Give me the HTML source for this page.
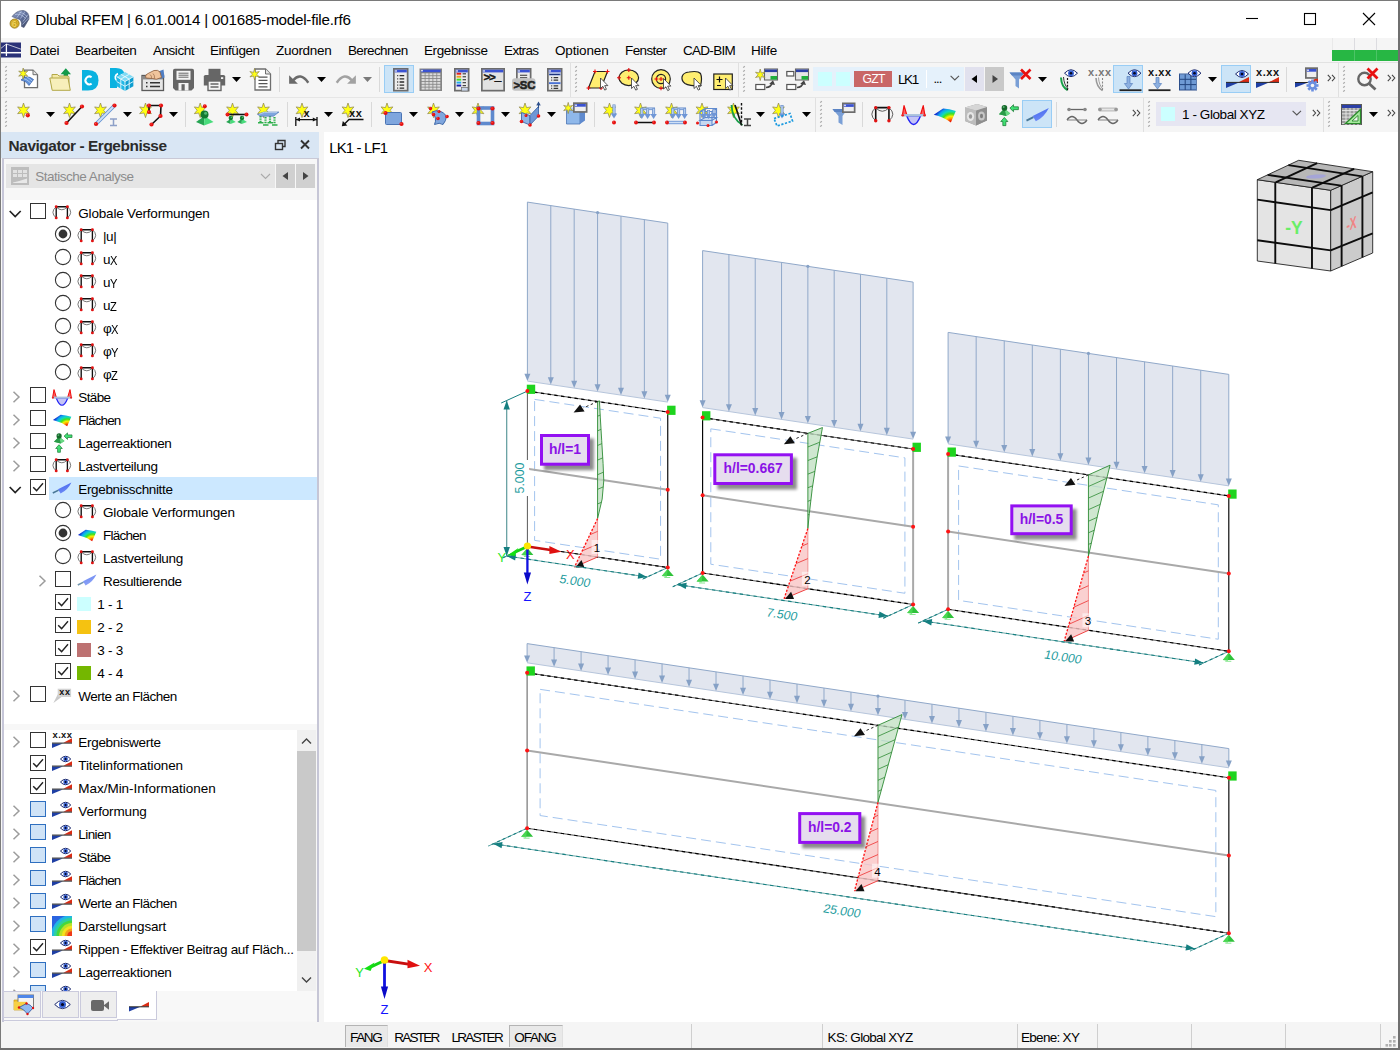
<!DOCTYPE html>
<html lang="de"><head><meta charset="utf-8"><title>Dlubal RFEM</title><style>
html,body{margin:0;padding:0}
body{width:1400px;height:1050px;position:relative;overflow:hidden;background:#f5f5f5;font-family:"Liberation Sans",sans-serif;font-size:13px;color:#000}
.t{position:absolute;white-space:nowrap}
.a{position:absolute}
</style></head><body>
<div class="a" style="left:0px;top:0px;width:1400px;height:38px;background:#fff;"></div>
<div class="t" style="left:35.30px;top:8.98px;font-size:15.2px;line-height:21px;letter-spacing:-0.228px;color:#000;">Dlubal RFEM | 6.01.0014 | 001685-model-file.rf6</div>
<svg class="a" style="left:9px;top:9px" width="22" height="21"><defs><linearGradient id="ti" x1="0" y1="0" x2="1" y2="1"><stop offset="0" stop-color="#8fa0c8"/><stop offset=".5" stop-color="#5f6f9a"/><stop offset="1" stop-color="#3c4662"/></linearGradient></defs><path d="M3 7.5Q8 1 14.5 1.5Q20.5 3 20 10L15 18.5L12.5 17.5Q13.5 10 7.5 9.5Z" fill="url(#ti)" stroke="#4a5470" stroke-width=".6"/><path d="M6 5.5Q12 4 16.5 9.5M9.5 3Q15 3.5 18.5 8M8 8.5L12.5 2M11.5 9.5L16 2.5M14 12.5L19 5.5M13.5 15.5L20 8.5" stroke="#c9d6f2" stroke-width=".7" fill="none" opacity=".85"/><circle cx="5.6" cy="14.6" r="4.6" fill="#d8b02a" stroke="#8a6e14" stroke-width=".7"/><text x="5.7" y="18.1" font-size="9.5" font-weight="bold" fill="#7a5c08" text-anchor="middle" font-family="Liberation Sans, sans-serif">6</text><text x="5.3" y="17.8" font-size="9.5" font-weight="bold" fill="#f4d85a" text-anchor="middle" font-family="Liberation Sans, sans-serif">6</text></svg>
<svg class="a" style="left:1230px;top:0" width="170" height="38"><path d="M16 18.5H28" stroke="#000" stroke-width="1.1" fill="none"/><rect x="74.5" y="13.5" width="11" height="11" stroke="#000" stroke-width="1.1" fill="none"/><path d="M133 13L145 25M145 13L133 25" stroke="#000" stroke-width="1.1" fill="none"/></svg>
<div class="a" style="left:0px;top:38px;width:1400px;height:24px;background:#f5f5f5;"></div>
<div class="t" style="left:29.50px;top:41.04px;font-size:13.5px;line-height:19px;letter-spacing:-0.403px;color:#000;">Datei</div>
<div class="t" style="left:75.00px;top:41.04px;font-size:13.5px;line-height:19px;letter-spacing:-0.380px;color:#000;">Bearbeiten</div>
<div class="t" style="left:153.00px;top:41.04px;font-size:13.5px;line-height:19px;letter-spacing:-0.467px;color:#000;">Ansicht</div>
<div class="t" style="left:210.00px;top:41.04px;font-size:13.5px;line-height:19px;letter-spacing:-0.475px;color:#000;">Einfügen</div>
<div class="t" style="left:276.00px;top:41.04px;font-size:13.5px;line-height:19px;letter-spacing:-0.287px;color:#000;">Zuordnen</div>
<div class="t" style="left:348.00px;top:41.04px;font-size:13.5px;line-height:19px;letter-spacing:-0.645px;color:#000;">Berechnen</div>
<div class="t" style="left:424.00px;top:41.04px;font-size:13.5px;line-height:19px;letter-spacing:-0.404px;color:#000;">Ergebnisse</div>
<div class="t" style="left:504.00px;top:41.04px;font-size:13.5px;line-height:19px;letter-spacing:-0.627px;color:#000;">Extras</div>
<div class="t" style="left:555.00px;top:41.04px;font-size:13.5px;line-height:19px;letter-spacing:-0.162px;color:#000;">Optionen</div>
<div class="t" style="left:625.00px;top:41.04px;font-size:13.5px;line-height:19px;letter-spacing:-0.610px;color:#000;">Fenster</div>
<div class="t" style="left:683.00px;top:41.04px;font-size:13.5px;line-height:19px;letter-spacing:-0.715px;color:#000;">CAD-BIM</div>
<div class="t" style="left:751.00px;top:41.04px;font-size:13.5px;line-height:19px;letter-spacing:-0.201px;color:#000;">Hilfe</div>
<svg class="a" style="left:1px;top:42px" width="21" height="16"><rect x="0" y=".5" width="20" height="15" fill="#2a3278"/><path d="M5.4 2V14" stroke="#fff" stroke-width="1.3"/><path d="M0 10.7H20" stroke="#fff" stroke-width="1.5"/><path d="M5.4 2L0 6.3M5.4 2L20 7.2" stroke="#fff" stroke-width=".7"/></svg>
<div class="a" style="left:1332px;top:38px;width:1px;height:23px;background:#e9e9e9;"></div>
<div class="a" style="left:1354px;top:38px;width:1px;height:23px;background:#dcdce0;"></div>
<div class="a" style="left:1376px;top:38px;width:1px;height:23px;background:#dcdce0;"></div>
<div class="a" style="left:1332px;top:50px;width:66px;height:11px;background:#27b744;"></div>
<div class="a" style="left:1354px;top:50px;width:1px;height:11px;background:#4cc466;"></div>
<div class="a" style="left:1376px;top:50px;width:1px;height:11px;background:#4cc466;"></div>
<div class="a" style="left:0px;top:62px;width:1400px;height:1px;background:#e2e2e2;"></div>
<div class="a" style="left:0px;top:97px;width:1400px;height:1px;background:#e6e6e6;"></div>
<svg class="a" style="left:4.6px;top:66px;overflow:visible" width="3" height="27"><path d="M0.2 1.6l1.6 -1.4" stroke="#a9a9a9" stroke-width="1.2"/><path d="M0.2 5.6l1.6 -1.4" stroke="#a9a9a9" stroke-width="1.2"/><path d="M0.2 9.6l1.6 -1.4" stroke="#a9a9a9" stroke-width="1.2"/><path d="M0.2 13.6l1.6 -1.4" stroke="#a9a9a9" stroke-width="1.2"/><path d="M0.2 17.6l1.6 -1.4" stroke="#a9a9a9" stroke-width="1.2"/><path d="M0.2 21.6l1.6 -1.4" stroke="#a9a9a9" stroke-width="1.2"/><path d="M0.2 25.6l1.6 -1.4" stroke="#a9a9a9" stroke-width="1.2"/></svg>
<svg class="a" style="left:4.6px;top:101px;overflow:visible" width="3" height="27"><path d="M0.2 1.6l1.6 -1.4" stroke="#a9a9a9" stroke-width="1.2"/><path d="M0.2 5.6l1.6 -1.4" stroke="#a9a9a9" stroke-width="1.2"/><path d="M0.2 9.6l1.6 -1.4" stroke="#a9a9a9" stroke-width="1.2"/><path d="M0.2 13.6l1.6 -1.4" stroke="#a9a9a9" stroke-width="1.2"/><path d="M0.2 17.6l1.6 -1.4" stroke="#a9a9a9" stroke-width="1.2"/><path d="M0.2 21.6l1.6 -1.4" stroke="#a9a9a9" stroke-width="1.2"/><path d="M0.2 25.6l1.6 -1.4" stroke="#a9a9a9" stroke-width="1.2"/></svg>
<svg class="a" style="left:575.2px;top:66px;overflow:visible" width="3" height="27"><path d="M0.2 1.6l1.6 -1.4" stroke="#a9a9a9" stroke-width="1.2"/><path d="M0.2 5.6l1.6 -1.4" stroke="#a9a9a9" stroke-width="1.2"/><path d="M0.2 9.6l1.6 -1.4" stroke="#a9a9a9" stroke-width="1.2"/><path d="M0.2 13.6l1.6 -1.4" stroke="#a9a9a9" stroke-width="1.2"/><path d="M0.2 17.6l1.6 -1.4" stroke="#a9a9a9" stroke-width="1.2"/><path d="M0.2 21.6l1.6 -1.4" stroke="#a9a9a9" stroke-width="1.2"/><path d="M0.2 25.6l1.6 -1.4" stroke="#a9a9a9" stroke-width="1.2"/></svg>
<svg class="a" style="left:743.2px;top:66px;overflow:visible" width="3" height="27"><path d="M0.2 1.6l1.6 -1.4" stroke="#a9a9a9" stroke-width="1.2"/><path d="M0.2 5.6l1.6 -1.4" stroke="#a9a9a9" stroke-width="1.2"/><path d="M0.2 9.6l1.6 -1.4" stroke="#a9a9a9" stroke-width="1.2"/><path d="M0.2 13.6l1.6 -1.4" stroke="#a9a9a9" stroke-width="1.2"/><path d="M0.2 17.6l1.6 -1.4" stroke="#a9a9a9" stroke-width="1.2"/><path d="M0.2 21.6l1.6 -1.4" stroke="#a9a9a9" stroke-width="1.2"/><path d="M0.2 25.6l1.6 -1.4" stroke="#a9a9a9" stroke-width="1.2"/></svg>
<svg class="a" style="left:1343.2px;top:66px;overflow:visible" width="3" height="27"><path d="M0.2 1.6l1.6 -1.4" stroke="#a9a9a9" stroke-width="1.2"/><path d="M0.2 5.6l1.6 -1.4" stroke="#a9a9a9" stroke-width="1.2"/><path d="M0.2 9.6l1.6 -1.4" stroke="#a9a9a9" stroke-width="1.2"/><path d="M0.2 13.6l1.6 -1.4" stroke="#a9a9a9" stroke-width="1.2"/><path d="M0.2 17.6l1.6 -1.4" stroke="#a9a9a9" stroke-width="1.2"/><path d="M0.2 21.6l1.6 -1.4" stroke="#a9a9a9" stroke-width="1.2"/><path d="M0.2 25.6l1.6 -1.4" stroke="#a9a9a9" stroke-width="1.2"/></svg>
<svg class="a" style="left:820.2px;top:101px;overflow:visible" width="3" height="27"><path d="M0.2 1.6l1.6 -1.4" stroke="#a9a9a9" stroke-width="1.2"/><path d="M0.2 5.6l1.6 -1.4" stroke="#a9a9a9" stroke-width="1.2"/><path d="M0.2 9.6l1.6 -1.4" stroke="#a9a9a9" stroke-width="1.2"/><path d="M0.2 13.6l1.6 -1.4" stroke="#a9a9a9" stroke-width="1.2"/><path d="M0.2 17.6l1.6 -1.4" stroke="#a9a9a9" stroke-width="1.2"/><path d="M0.2 21.6l1.6 -1.4" stroke="#a9a9a9" stroke-width="1.2"/><path d="M0.2 25.6l1.6 -1.4" stroke="#a9a9a9" stroke-width="1.2"/></svg>
<svg class="a" style="left:1148.2px;top:101px;overflow:visible" width="3" height="27"><path d="M0.2 1.6l1.6 -1.4" stroke="#a9a9a9" stroke-width="1.2"/><path d="M0.2 5.6l1.6 -1.4" stroke="#a9a9a9" stroke-width="1.2"/><path d="M0.2 9.6l1.6 -1.4" stroke="#a9a9a9" stroke-width="1.2"/><path d="M0.2 13.6l1.6 -1.4" stroke="#a9a9a9" stroke-width="1.2"/><path d="M0.2 17.6l1.6 -1.4" stroke="#a9a9a9" stroke-width="1.2"/><path d="M0.2 21.6l1.6 -1.4" stroke="#a9a9a9" stroke-width="1.2"/><path d="M0.2 25.6l1.6 -1.4" stroke="#a9a9a9" stroke-width="1.2"/></svg>
<svg class="a" style="left:1328.2px;top:101px;overflow:visible" width="3" height="27"><path d="M0.2 1.6l1.6 -1.4" stroke="#a9a9a9" stroke-width="1.2"/><path d="M0.2 5.6l1.6 -1.4" stroke="#a9a9a9" stroke-width="1.2"/><path d="M0.2 9.6l1.6 -1.4" stroke="#a9a9a9" stroke-width="1.2"/><path d="M0.2 13.6l1.6 -1.4" stroke="#a9a9a9" stroke-width="1.2"/><path d="M0.2 17.6l1.6 -1.4" stroke="#a9a9a9" stroke-width="1.2"/><path d="M0.2 21.6l1.6 -1.4" stroke="#a9a9a9" stroke-width="1.2"/><path d="M0.2 25.6l1.6 -1.4" stroke="#a9a9a9" stroke-width="1.2"/></svg>
<div class="a" style="left:570px;top:63px;width:1px;height:34px;background:#e0e0e0"></div>
<div class="a" style="left:738px;top:63px;width:1px;height:34px;background:#e0e0e0"></div>
<div class="a" style="left:1338px;top:63px;width:1px;height:34px;background:#e0e0e0"></div>
<div class="a" style="left:815px;top:98px;width:1px;height:34px;background:#e0e0e0"></div>
<div class="a" style="left:1143px;top:98px;width:1px;height:34px;background:#e0e0e0"></div>
<div class="a" style="left:1323px;top:98px;width:1px;height:34px;background:#e0e0e0"></div>
<div class="a" style="left:279px;top:67px;width:1px;height:25px;background:#d9d9d9"></div>
<div class="a" style="left:379px;top:67px;width:1px;height:25px;background:#d9d9d9"></div>
<div class="a" style="left:1286px;top:67px;width:1px;height:25px;background:#d9d9d9"></div>
<div class="a" style="left:185px;top:102px;width:1px;height:25px;background:#d9d9d9"></div>
<div class="a" style="left:287px;top:102px;width:1px;height:25px;background:#d9d9d9"></div>
<div class="a" style="left:371px;top:102px;width:1px;height:25px;background:#d9d9d9"></div>
<div class="a" style="left:594px;top:102px;width:1px;height:25px;background:#d9d9d9"></div>
<div class="a" style="left:862px;top:102px;width:1px;height:25px;background:#d9d9d9"></div>
<div class="a" style="left:1056px;top:102px;width:1px;height:25px;background:#d9d9d9"></div>
<svg class="a" style="left:18px;top:68px;overflow:visible" width="22" height="22"><path d="M6.5 2.2H15L19.5 6.7V19.7H6.5Z" fill="#fff" stroke="#6e6e6e" stroke-width="1.3"/><path d="M15 2.2V6.7H19.5" fill="#e4e4e4" stroke="#6e6e6e" stroke-width="1"/><path d="M3 12Q9 6 15.5 11.5L11 17.5Q8 12.5 3 12Z" fill="#5f8fd8" stroke="#2c58a6" stroke-width=".7"/><path d="M5.5 10.5Q8.5 11 12.8 15M8.5 8.8Q11 10 14.3 13.2" stroke="#c6dcf7" stroke-width=".7" fill="none"/><polygon points="5.2,0 6.25,3.78 9.71,3 7.3,5.6 9.71,8.2 6.25,7.42 5.2,11.2 4.15,7.42 0.69,8.2 3.1,5.6 0.69,3 4.15,3.78" fill="#ffff14" stroke="#8c8450" stroke-width=".7" stroke-linejoin="miter"/></svg>
<svg class="a" style="left:49px;top:68px;overflow:visible" width="23" height="23"><path d="M14.6 11V6.2H11.6L16.8 .3L22 6.2H19V11Z" fill="#129a4a"/><path d="M3 6.5H8.5L10 8H18.5Q20 8 20 9.5V20.5H3Z" fill="#f3e9a8" stroke="#b3a848" stroke-width="1"/><path d="M.8 10H19L21.3 22.3H3.2Z" fill="#f7efba" stroke="#b3a848" stroke-width="1" stroke-linejoin="round"/></svg>
<svg class="a" style="left:82px;top:69.5px;overflow:visible" width="17" height="21"><path d="M0 0H6Q16.5 0 16.5 10.3Q16.5 20.6 6 20.6H0Z" fill="#0ab2e0"/><path d="M9.6 13.6A3.9 3.9 0 1 1 9.6 7.2" fill="none" stroke="#fff" stroke-width="2"/></svg>
<svg class="a" style="left:110px;top:68px;overflow:visible" width="24" height="24"><path d="M0 0H6Q13.5 0 14.5 6L7 10V20H0Z" fill="#0ab2e0"/><path d="M6.8 12.5A4 4 0 0 1 8 5.6" fill="none" stroke="#fff" stroke-width="1.8"/><polygon points="6.65,8.7 15,3.9 23.35,8.7 15,13.5" fill="#7fdaf4"/><polygon points="6.65,8.7 15,13.5 15,23.1 6.65,18.3" fill="#22b8e6"/><polygon points="15,13.5 23.35,8.7 23.35,18.3 15,23.1" fill="#0e9ed0"/><path d="M15 13.5L23.35 8.7M15 13.5L15 23.1M15 13.5L6.65 8.7M10.82 6.3L19.18 11.1M19.18 6.3L10.82 11.1M6.65 13.5L15 18.3M10.82 11.1L10.82 20.7M19.18 11.1L19.18 20.7M15 18.3L23.35 13.5" stroke="#e8f8fe" stroke-width=".9" fill="none"/></svg>
<svg class="a" style="left:141px;top:68px;overflow:visible" width="24" height="24"><rect x="1" y="7.5" width="21.5" height="15" fill="#e6e6e6" stroke="#5a5a5a" stroke-width="1.3"/><rect x="1.5" y="8" width="20.5" height="3.4" fill="#8a8a8a"/><path d="M5 14.8H6.5M9 14.8H19M5 18.6H6.5M9 18.6H19" stroke="#333" stroke-width="1.5"/><path d="M22.5 1.5L17.5 3.5L19.5 11L23.5 9.5Z" fill="#4f7ec4"/><path d="M4.5 9Q4 6.5 8 5L13 2.5Q17 1.5 19 4L20.5 9.5Q15 12.5 11.5 10.5L7 10.2Q5 10.5 4.5 9Z" fill="#f0c49c" stroke="#8a5a3a" stroke-width=".8"/><path d="M9 6.5Q11 8 10.5 10M12 5.5Q14 7.5 13.5 10.5" stroke="#8a5a3a" stroke-width=".6" fill="none"/></svg>
<svg class="a" style="left:172px;top:68px;overflow:visible" width="24" height="23"><path d="M1 2.5Q1 .8 2.8 .8H20.2Q22 .8 22 2.5V20L19.5 22.5H3.5L1 20Z" fill="#666"/><rect x="4.5" y="2.8" width="14" height="9" fill="#f4f4f4"/><path d="M6.5 5.2H16.5M6.5 7.2H16.5M6.5 9.2H16.5" stroke="#666" stroke-width="1"/><rect x="6.5" y="15" width="10" height="7.5" fill="#f4f4f4"/><rect x="9.5" y="16.2" width="3.2" height="6.3" fill="#666"/></svg>
<svg class="a" style="left:203px;top:68px;overflow:visible" width="24" height="23"><rect x="5.5" y=".8" width="12" height="7" fill="#666"/><path d="M.8 8.5Q.8 7 2.5 7H20.5Q22.2 7 22.2 8.5V17.5H.8Z" fill="#666"/><rect x="18" y="9.2" width="2.2" height="1.8" fill="#f4f4f4"/><rect x="5" y="13" width="13" height="9.5" fill="#f4f4f4" stroke="#666" stroke-width="1.4"/><path d="M7.5 16H15.5M7.5 19H15.5" stroke="#666" stroke-width="1.3"/></svg>
<svg class="a" style="left:232px;top:77px;overflow:visible" width="9" height="5"><path d="M0 0H9L4.5 5Z" fill="#000"/></svg>
<svg class="a" style="left:249px;top:68px;overflow:visible" width="24" height="23"><path d="M6 1H16.5L21.5 6V22H6Z" fill="#fff" stroke="#6e6e6e" stroke-width="1.3"/><path d="M16.5 1V6H21.5" fill="#e4e4e4" stroke="#6e6e6e" stroke-width="1"/><path d="M9.5 9.2H18.5M9.5 12.4H18.5M9.5 15.6H18.5M9.5 18.8H18.5" stroke="#555" stroke-width="1.2"/><polygon points="5.6,0.4 6.65,4.38 10.27,3.5 7.7,6.2 10.27,8.9 6.65,8.02 5.6,12 4.55,8.02 0.93,8.9 3.5,6.2 0.93,3.5 4.55,4.38" fill="#ffff14" stroke="#8c8450" stroke-width=".7" stroke-linejoin="miter"/></svg>
<svg class="a" style="left:289px;top:75px;overflow:visible" width="21" height="10"><path d="M4 5.5Q11.5 -3.5 19.3 7.7" fill="none" stroke="#6a6a6a" stroke-width="2.5"/><path d="M.1 .2V8.8H8.9Z" fill="#6a6a6a"/></svg>
<svg class="a" style="left:317px;top:77px;overflow:visible" width="9" height="5"><path d="M0 0H9L4.5 5Z" fill="#000"/></svg>
<svg class="a" style="left:335.7px;top:75px;overflow:visible" width="21" height="10"><path d="M16 5.5Q8.5 -3.5 .7 7.7" fill="none" stroke="#a2a2a2" stroke-width="2.5"/><path d="M19.9 .2V8.8H11.1Z" fill="#a2a2a2"/></svg>
<svg class="a" style="left:363px;top:77px;overflow:visible" width="9" height="5"><path d="M0 0H9L4.5 5Z" fill="#7a7a7a"/></svg>
<div class="a" style="left:384px;top:65px;width:30px;height:28px;background:#cce4f7;border:1px solid #99cdf5;box-sizing:border-box"></div>
<svg class="a" style="left:393px;top:68px;overflow:visible" width="15" height="23"><rect x="0.85" y="0.85" width="13.8" height="21.8" fill="#ececec" stroke="#6c6c6c" stroke-width="1.7"/><rect x="1.7" y="1.7" width="12.1" height="2.7" fill="#3a52d2"/><rect x="2.2" y="2.2" width="1.6" height="1.5" fill="#f2f2f2"/><path d="M4.2 7.6H5.2M6.6 7.6H11.2M4.2 10.8H5.2M6.6 10.8H11.2M4.2 14H5.2M6.6 14H11.2M4.2 17.2H5.2M6.6 17.2H11.2M4.2 20.2H5.2M6.6 20.2H11.2" stroke="#2a2a2a" stroke-width="1.3"/></svg>
<svg class="a" style="left:419px;top:68px;overflow:visible" width="23" height="23"><rect x=".5" y=".5" width="22.5" height="22.5" fill="#858585"/><rect x="1.8" y="1.6" width="19.8" height="2.6" fill="#3a52d2"/><rect x="2.2" y="1.9" width="1.6" height="1.5" fill="#f2f2f2"/><rect x="2.6" y="5.3" width="3.1" height="2" fill="#dcdcdc"/><rect x="6.5" y="5.3" width="3.1" height="2" fill="#dcdcdc"/><rect x="10.4" y="5.3" width="3.1" height="2" fill="#dcdcdc"/><rect x="14.3" y="5.3" width="3.1" height="2" fill="#dcdcdc"/><rect x="18.2" y="5.3" width="3.1" height="2" fill="#dcdcdc"/><rect x="2.6" y="8.15" width="3.1" height="2" fill="#dcdcdc"/><rect x="6.5" y="8.15" width="3.1" height="2" fill="#dcdcdc"/><rect x="10.4" y="8.15" width="3.1" height="2" fill="#dcdcdc"/><rect x="14.3" y="8.15" width="3.1" height="2" fill="#dcdcdc"/><rect x="18.2" y="8.15" width="3.1" height="2" fill="#dcdcdc"/><rect x="2.6" y="11" width="3.1" height="2" fill="#dcdcdc"/><rect x="6.5" y="11" width="3.1" height="2" fill="#dcdcdc"/><rect x="10.4" y="11" width="3.1" height="2" fill="#dcdcdc"/><rect x="14.3" y="11" width="3.1" height="2" fill="#dcdcdc"/><rect x="18.2" y="11" width="3.1" height="2" fill="#dcdcdc"/><rect x="2.6" y="13.85" width="3.1" height="2" fill="#dcdcdc"/><rect x="6.5" y="13.85" width="3.1" height="2" fill="#dcdcdc"/><rect x="10.4" y="13.85" width="3.1" height="2" fill="#dcdcdc"/><rect x="14.3" y="13.85" width="3.1" height="2" fill="#dcdcdc"/><rect x="18.2" y="13.85" width="3.1" height="2" fill="#dcdcdc"/><rect x="2.6" y="16.7" width="3.1" height="2" fill="#dcdcdc"/><rect x="6.5" y="16.7" width="3.1" height="2" fill="#dcdcdc"/><rect x="10.4" y="16.7" width="3.1" height="2" fill="#dcdcdc"/><rect x="14.3" y="16.7" width="3.1" height="2" fill="#dcdcdc"/><rect x="18.2" y="16.7" width="3.1" height="2" fill="#dcdcdc"/><rect x="2.6" y="19.55" width="3.1" height="2" fill="#dcdcdc"/><rect x="6.5" y="19.55" width="3.1" height="2" fill="#dcdcdc"/><rect x="10.4" y="19.55" width="3.1" height="2" fill="#dcdcdc"/><rect x="14.3" y="19.55" width="3.1" height="2" fill="#dcdcdc"/><rect x="18.2" y="19.55" width="3.1" height="2" fill="#dcdcdc"/></svg>
<svg class="a" style="left:454px;top:68px;overflow:visible" width="16" height="23"><rect x="0.85" y="0.85" width="13.8" height="21.8" fill="#ececec" stroke="#6c6c6c" stroke-width="1.7"/><rect x="1.7" y="1.7" width="12.1" height="2.7" fill="#3a52d2"/><rect x="2.2" y="2.2" width="1.6" height="1.5" fill="#f2f2f2"/><rect x="2.6" y="4.8" width="4.6" height="1.9" fill="#e02020"/><path d="M8.6 5.8H12" stroke="#444" stroke-width="1.2"/><rect x="2.6" y="7.75" width="4.6" height="1.9" fill="#f0a020"/><path d="M8.6 8.75H12" stroke="#444" stroke-width="1.2"/><rect x="2.6" y="10.7" width="4.6" height="1.9" fill="#40e020"/><path d="M8.6 11.7H12" stroke="#444" stroke-width="1.2"/><rect x="2.6" y="13.65" width="4.6" height="1.9" fill="#20a8f0"/><path d="M8.6 14.65H12" stroke="#444" stroke-width="1.2"/><rect x="2.6" y="16.6" width="4.6" height="1.9" fill="#1a20b0"/><path d="M8.6 17.6H12" stroke="#444" stroke-width="1.2"/><rect x="7.5" y="19.6" width="6.5" height="3.4" fill="#c8d4e8" stroke="#6a6a6a" stroke-width=".7"/></svg>
<svg class="a" style="left:481px;top:68px;overflow:visible" width="23" height="23"><rect x="0.85" y="0.85" width="22.3" height="21.8" fill="#e2e2e2" stroke="#6c6c6c" stroke-width="1.7"/><rect x="1.7" y="1.7" width="20.6" height="2.7" fill="#3a52d2"/><rect x="2.2" y="2.2" width="1.6" height="1.5" fill="#f2f2f2"/><text x="2.6" y="12.6" font-size="11.5" font-weight="bold" fill="#161616" stroke="#161616" stroke-width=".4" font-family="Liberation Mono, monospace" letter-spacing="-1.4">&gt;&gt;_</text></svg>
<svg class="a" style="left:512px;top:68px;overflow:visible" width="24" height="23"><rect x="4.85" y="0.85" width="13.8" height="12.3" fill="#ececec" stroke="#6c6c6c" stroke-width="1.7"/><rect x="5.7" y="1.7" width="12.1" height="2.7" fill="#3a52d2"/><rect x="6.2" y="2.2" width="1.6" height="1.5" fill="#f2f2f2"/><path d="M8 7.2H15.2M8 9.8H15.2" stroke="#333" stroke-width="1.1"/><rect x="0" y="10.2" width="23.5" height="12.6" rx="3" fill="#c2c2c2"/><text x="1.4" y="20.8" font-size="11.4" font-weight="bold" fill="#222" stroke="#222" stroke-width=".55" font-family="Liberation Sans, sans-serif" letter-spacing="-.2">&gt;SC</text></svg>
<svg class="a" style="left:547px;top:68px;overflow:visible" width="16" height="23"><rect x="0.85" y="0.85" width="13.8" height="21.8" fill="#ececec" stroke="#6c6c6c" stroke-width="1.7"/><rect x="1.7" y="1.7" width="12.1" height="2.7" fill="#3a52d2"/><rect x="2.2" y="2.2" width="1.6" height="1.5" fill="#f2f2f2"/><path d="M4.2 9.6H5.2M6.6 9.6H11.2M4.2 12.2H5.2M6.6 12.2H11.2M4.2 17.8H5.2M6.6 17.8H11.2M4.2 20.4H5.2M6.6 20.4H11.2" stroke="#333" stroke-width="1.2"/><rect x="2" y="5.6" width="11.5" height="1.7" fill="#3b62c4"/><rect x="2.8" y="6" width="9.8" height=".8" fill="#1a2a6a"/><rect x="2" y="14.2" width="11.5" height="1.9" fill="#4a72d4"/></svg>
<svg class="a" style="left:587px;top:68px;overflow:visible" width="23" height="23"><path d="M8 3.5H20.5L14 20H1.5Z" fill="#ffee70" stroke="#222" stroke-width="1.2"/><path d="M6 3.5h4m-2-2v4" stroke="#e81010" stroke-width="1.1"/><path d="M18.5 3.5h4m-2-2v4" stroke="#e81010" stroke-width="1.1"/><path d="M-0.5 20h4m-2-2v4" stroke="#e81010" stroke-width="1.1"/><path d="M12 20h4m-2-2v4" stroke="#e81010" stroke-width="1.1"/><path d="M13.5 10v10.5l2.4-2.2 1.8 3.8 1.7-.8-1.7-3.7h3.2z" fill="#fff" stroke="#333" stroke-width=".8" stroke-linejoin="round"/></svg>
<svg class="a" style="left:618px;top:68px;overflow:visible" width="23" height="23"><ellipse cx="10.8" cy="9.8" rx="9.8" ry="7.8" fill="#ffee70" stroke="#222" stroke-width="1.2"/><path d="M8.8 2h4m-2-2v4" stroke="#e81010" stroke-width="1.1"/><path d="M-1 9.8h4m-2-2v4" stroke="#e81010" stroke-width="1.1"/><path d="M8.8 9.8h4m-2-2v4" stroke="#e81010" stroke-width="1.1"/><path d="M13.5 10v10.5l2.4-2.2 1.8 3.8 1.7-.8-1.7-3.7h3.2z" fill="#fff" stroke="#333" stroke-width=".8" stroke-linejoin="round"/></svg>
<svg class="a" style="left:651px;top:68px;overflow:visible" width="22" height="23"><circle cx="10" cy="11" r="9.3" fill="#ffee70" stroke="#222" stroke-width="1.2"/><circle cx="10" cy="11" r="4.6" fill="#ffee70" stroke="#222" stroke-width="1.2"/><path d="M3.4 11h4m-2-2v4" stroke="#e81010" stroke-width="1.1"/><path d="M8 11h4m-2-2v4" stroke="#e81010" stroke-width="1.1"/><path d="M8 20.3h4m-2-2v4" stroke="#e81010" stroke-width="1.1"/><path d="M12.5 10.5v10.5l2.4-2.2 1.8 3.8 1.7-.8-1.7-3.7h3.2z" fill="#fff" stroke="#333" stroke-width=".8" stroke-linejoin="round"/></svg>
<svg class="a" style="left:681px;top:68px;overflow:visible" width="22" height="23"><path d="M1 9Q2 4.5 8 4Q17 2.5 19.5 5.5Q21.5 10 19.5 18Q8 18 4 15.5Q.5 13 1 9Z" fill="#ffee70" stroke="#222" stroke-width="1.2"/><path d="M13 10v10.5l2.4-2.2 1.8 3.8 1.7-.8-1.7-3.7h3.2z" fill="#fff" stroke="#333" stroke-width=".8" stroke-linejoin="round"/></svg>
<svg class="a" style="left:713px;top:68px;overflow:visible" width="22" height="23"><rect x=".8" y="6" width="18.5" height="15.5" fill="#ffee70" stroke="#222" stroke-width="1.2"/><path d="M3.5 11.5H9.5M6.5 8.5V14.5M4 17.5H8" stroke="#111" stroke-width="1.2"/><path d="M12.5 10v10.5l2.4-2.2 1.8 3.8 1.7-.8-1.7-3.7h3.2z" fill="#fff" stroke="#333" stroke-width=".8" stroke-linejoin="round"/></svg>
<svg class="a" style="left:755px;top:68px;overflow:visible" width="24" height="23"><rect x="9.5" y="1" width="13" height="11" fill="#e6e6e6" stroke="#666" stroke-width="1.1"/><rect x="10" y="1.5" width="12" height="2.6" fill="#2b3fa6"/><rect x="15.5" y="8" width="6.5" height="3.6" fill="#1fae3c"/><rect x=".8" y="16.5" width="9" height="5" fill="#fff" stroke="#555" stroke-width="1.2"/><path d="M11 19.5Q16 19.5 17.2 14.5" fill="none" stroke="#444" stroke-width="1.6"/><path d="M14.2 16L18 12.2L20 17Z" fill="#444"/><polygon points="5.2,1 6.25,4.98 9.87,4.1 7.3,6.8 9.87,9.5 6.25,8.62 5.2,12.6 4.15,8.62 0.53,9.5 3.1,6.8 0.53,4.1 4.15,4.98" fill="#ffff14" stroke="#8c8450" stroke-width=".7" stroke-linejoin="miter"/></svg>
<svg class="a" style="left:786px;top:68px;overflow:visible" width="24" height="23"><rect x="9.5" y="1" width="13" height="11" fill="#e6e6e6" stroke="#666" stroke-width="1.1"/><rect x="10" y="1.5" width="12" height="2.6" fill="#2b3fa6"/><rect x="15.5" y="8" width="6.5" height="3.6" fill="#1fae3c"/><rect x=".8" y="16.5" width="9" height="5" fill="#fff" stroke="#555" stroke-width="1.2"/><path d="M11 19.5Q16 19.5 17.2 14.5" fill="none" stroke="#444" stroke-width="1.6"/><path d="M14.2 16L18 12.2L20 17Z" fill="#444"/><rect x=".8" y="3.5" width="7" height="4.5" fill="#fff" stroke="#555" stroke-width="1.2"/></svg>
<div class="a" style="left:813px;top:67px;width:151px;height:24px;background:#e5f1fb"></div>
<div class="a" style="left:818px;top:72px;width:14px;height:14px;background:#ccffff"></div><div class="a" style="left:836px;top:72px;width:14px;height:14px;background:#ccffff"></div>
<div class="a" style="left:854px;top:71px;width:38px;height:16px;background:#c96767"></div>
<div class="t" style="left:862.40px;top:71.47px;font-size:12.2px;line-height:17px;letter-spacing:-0.598px;color:#fff;">GZT</div>
<div class="t" style="left:898.00px;top:70.04px;font-size:13.5px;line-height:19px;letter-spacing:-1.407px;color:#000;">LK1</div>
<div class="a" style="left:926px;top:70px;width:1px;height:18px;background:#fff"></div>
<div class="t" style="left:933.4px;top:70.6px;font-size:13px;color:#000;letter-spacing:-.9px">...</div>
<svg class="a" style="left:950px;top:75px;overflow:visible" width="10" height="7"><path d="M.6 .8L4.8 5L9 .8" stroke="#555" stroke-width="1.1" fill="none"/></svg>
<div class="a" style="left:965px;top:67px;width:19px;height:24px;background:#e1e1ee"></div><div class="a" style="left:985px;top:67px;width:19px;height:24px;background:#c9c9c9"></div>
<svg class="a" style="left:965px;top:67px;overflow:visible" width="40" height="24"><path d="M12 8L6.5 12L12 16Z" fill="#000"/><path d="M27.5 8L33 12L27.5 16Z" fill="#444"/></svg>
<svg class="a" style="left:1009px;top:68px;overflow:visible" width="24" height="22"><path d="M.5 4.5H15.5L10 11.5V20.5L6.5 18V11.5Z" fill="#7a9fd6"/><path d="M.5 4.5H15.5L13 7.5H3Z" fill="#5b84c4"/><path d="M12 1.5L21.5 11M21.5 1.5L12 11" stroke="#e81010" stroke-width="2.6"/></svg>
<svg class="a" style="left:1038px;top:77px;overflow:visible" width="9" height="5"><path d="M0 0H9L4.5 5Z" fill="#000"/></svg>
<svg class="a" style="left:1058px;top:67px;overflow:visible" width="20" height="24"><path d="M6.52 6.2Q13 -0.71 19.48 6.2Q13 13.11 6.52 6.2Z" fill="#fff" stroke="#1c2a6e" stroke-width="1"/><circle cx="13" cy="6.2" r="2.92" fill="#3560d4"/><circle cx="13" cy="6.2" r="1.3" fill="#06061e"/><path d="M3 10.5Q3.5 20 9.5 23" fill="none" stroke="#18a048" stroke-width="2"/><path d="M5.5 10Q6 18 10 21.5" fill="none" stroke="#222" stroke-width=".9"/><path d="M9.5 11V23.5" stroke="#111" stroke-width="1.2" stroke-dasharray="2 1.4"/></svg>
<svg class="a" style="left:1088px;top:67px;overflow:visible" width="22" height="24"><text x="0" y="8.5" font-size="11" font-weight="bold" fill="#777" letter-spacing=".55" font-family="Liberation Sans, sans-serif">x.xx</text><path d="M8 11Q8.5 20 14.5 23.5" fill="none" stroke="#999" stroke-width="1.6"/><path d="M10.5 10.5Q11 18.5 15 22" fill="none" stroke="#888" stroke-width=".8"/><path d="M14.5 11V23.5" stroke="#888" stroke-width="1.1" stroke-dasharray="2 1.4"/></svg>
<div class="a" style="left:1113px;top:65px;width:30px;height:28px;background:#cce4f7;border:1px solid #99cdf5;box-sizing:border-box"></div>
<svg class="a" style="left:1119px;top:67px;overflow:visible" width="23" height="25"><path d="M8 9.5H11V16.5H13.6L9.5 22L5.4 16.5H8Z" fill="#8db0e0" stroke="#5a82c0" stroke-width=".7"/><path d="M.5 23.2H22.5" stroke="#222" stroke-width="1.8"/><path d="M9.02 6.2Q15.5 -0.71 21.98 6.2Q15.5 13.11 9.02 6.2Z" fill="#fff" stroke="#1c2a6e" stroke-width="1"/><circle cx="15.5" cy="6.2" r="2.92" fill="#3560d4"/><circle cx="15.5" cy="6.2" r="1.3" fill="#06061e"/></svg>
<svg class="a" style="left:1148px;top:67px;overflow:visible" width="23" height="25"><text x="0" y="8.5" font-size="11" font-weight="bold" fill="#111" letter-spacing=".55" font-family="Liberation Sans, sans-serif">x.xx</text><path d="M8 10.5H11V16.5H13.6L9.5 22L5.4 16.5H8Z" fill="#8db0e0" stroke="#5a82c0" stroke-width=".7"/><path d="M.5 23.2H22.5" stroke="#222" stroke-width="1.8"/></svg>
<svg class="a" style="left:1179px;top:67px;overflow:visible" width="23" height="24"><rect x=".5" y="7" width="17" height="16" fill="#6f9ad4" stroke="#2c4f8c" stroke-width="1"/><path d="M.5 12.3H17.5M.5 17.6H17.5M6.2 7V23M11.9 7V23" stroke="#24457e" stroke-width="1"/><path d="M.5 7H17.5V23" fill="none" stroke="#bcd4f2" stroke-width=".6" opacity=".6"/><path d="M9.02 6.2Q15.5 -0.71 21.98 6.2Q15.5 13.11 9.02 6.2Z" fill="#fff" stroke="#1c2a6e" stroke-width="1"/><circle cx="15.5" cy="6.2" r="2.92" fill="#3560d4"/><circle cx="15.5" cy="6.2" r="1.3" fill="#06061e"/></svg>
<svg class="a" style="left:1208px;top:77px;overflow:visible" width="9" height="5"><path d="M0 0H9L4.5 5Z" fill="#000"/></svg>
<div class="a" style="left:1221px;top:65px;width:30px;height:28px;background:#cce4f7;border:1px solid #99cdf5;box-sizing:border-box"></div>
<svg class="a" style="left:1226px;top:67px;overflow:visible" width="24" height="24"><path d="M0 15.7V20.9L12.42 15.7Z" fill="#1f3fa4"/><path d="M23 9.9V15.1H13.11Z" fill="#d92c14"/><path d="M0 15.4H23" stroke="#222" stroke-width="1"/><path d="M9.52 7Q16 0.09 22.48 7Q16 13.91 9.52 7Z" fill="#fff" stroke="#1c2a6e" stroke-width="1"/><circle cx="16" cy="7" r="2.92" fill="#3560d4"/><circle cx="16" cy="7" r="1.3" fill="#06061e"/></svg>
<svg class="a" style="left:1256px;top:67px;overflow:visible" width="24" height="24"><text x="0" y="8.6" font-size="11" font-weight="bold" fill="#111" letter-spacing=".55" font-family="Liberation Sans, sans-serif">x.xx</text><path d="M0 15.7V20.9L12.42 15.7Z" fill="#1f3fa4"/><path d="M23 9.9V15.1H13.11Z" fill="#d92c14"/><path d="M0 15.4H23" stroke="#222" stroke-width="1"/></svg>
<svg class="a" style="left:1295px;top:67px;overflow:visible" width="24" height="25"><path d="M0 15.8V20.5L12.42 15.8Z" fill="#1f3fa4"/><path d="M23 10.5V15.2H13.11Z" fill="#d92c14"/><path d="M0 15.5H23" stroke="#222" stroke-width="1"/><rect x="10.85" y="1.15" width="11.3" height="9.8" fill="#eee" stroke="#6c6c6c" stroke-width="1.7"/><rect x="11.7" y="2" width="9.6" height="2.7" fill="#3a52d2"/><rect x="12.2" y="2.5" width="1.6" height="1.5" fill="#f2f2f2"/><g transform="translate(17.5 18.5)"><rect x="-1.3" y="-6" width="2.6" height="3.2" fill="#6a8fe0" transform="rotate(0)"/><rect x="-1.3" y="-6" width="2.6" height="3.2" fill="#6a8fe0" transform="rotate(45)"/><rect x="-1.3" y="-6" width="2.6" height="3.2" fill="#6a8fe0" transform="rotate(90)"/><rect x="-1.3" y="-6" width="2.6" height="3.2" fill="#6a8fe0" transform="rotate(135)"/><rect x="-1.3" y="-6" width="2.6" height="3.2" fill="#6a8fe0" transform="rotate(180)"/><rect x="-1.3" y="-6" width="2.6" height="3.2" fill="#6a8fe0" transform="rotate(225)"/><rect x="-1.3" y="-6" width="2.6" height="3.2" fill="#6a8fe0" transform="rotate(270)"/><rect x="-1.3" y="-6" width="2.6" height="3.2" fill="#6a8fe0" transform="rotate(315)"/><circle r="4" fill="#6a8fe0"/><circle r="1.8" fill="#f5f5f5"/></g></svg>
<svg class="a" style="left:1327px;top:74px;overflow:visible" width="9" height="8"><path d="M.8 .8L3.6 4L.8 7.2M5 .8L7.8 4L5 7.2" stroke="#444" stroke-width="1.1" fill="none"/></svg>
<svg class="a" style="left:1356px;top:67px;overflow:visible" width="24" height="24"><circle cx="8.5" cy="12" r="6.2" fill="none" stroke="#666" stroke-width="2.4"/><path d="M13 16.5L19.5 22.5" stroke="#666" stroke-width="2.8"/><path d="M11.5 1.5L21.5 11.5M21.5 1.5L11.5 11.5" stroke="#e81010" stroke-width="2.8"/></svg>
<svg class="a" style="left:1387px;top:74px;overflow:visible" width="9" height="8"><path d="M.8 .8L3.6 4L.8 7.2M5 .8L7.8 4L5 7.2" stroke="#444" stroke-width="1.1" fill="none"/></svg>
<svg class="a" style="left:16px;top:102px;overflow:visible" width="16" height="18"><polygon points="7.5,1 9.05,5.62 13.38,4.91 10.6,8.3 13.38,11.69 9.05,10.98 7.5,15.6 5.95,10.98 1.62,11.69 4.4,8.3 1.62,4.91 5.95,5.62" fill="#ffff14" stroke="#8c8450" stroke-width=".7" stroke-linejoin="miter"/><circle cx="11.8" cy="13.3" r="2.1" fill="#e60f0f"/><circle cx="11.3" cy="12.7" r="0.73" fill="#ff6a5a" opacity=".7"/></svg>
<svg class="a" style="left:46px;top:112px;overflow:visible" width="9" height="5"><path d="M0 0H9L4.5 5Z" fill="#000"/></svg>
<svg class="a" style="left:62px;top:102px;overflow:visible" width="24" height="24"><polygon points="7.5,1 9.05,5.62 13.38,4.91 10.6,8.3 13.38,11.69 9.05,10.98 7.5,15.6 5.95,10.98 1.62,11.69 4.4,8.3 1.62,4.91 5.95,5.62" fill="#ffff14" stroke="#8c8450" stroke-width=".7" stroke-linejoin="miter"/><path d="M4.5 21L20 4.5" stroke="#111" stroke-width="1.6"/><circle cx="4.5" cy="21" r="2.1" fill="#e60f0f"/><circle cx="4" cy="20.4" r="0.73" fill="#ff6a5a" opacity=".7"/><circle cx="20" cy="4.5" r="2.1" fill="#e60f0f"/><circle cx="19.5" cy="3.9" r="0.73" fill="#ff6a5a" opacity=".7"/></svg>
<svg class="a" style="left:93px;top:102px;overflow:visible" width="25" height="25"><polygon points="7.5,1 9.05,5.62 13.38,4.91 10.6,8.3 13.38,11.69 9.05,10.98 7.5,15.6 5.95,10.98 1.62,11.69 4.4,8.3 1.62,4.91 5.95,5.62" fill="#ffff14" stroke="#8c8450" stroke-width=".7" stroke-linejoin="miter"/><path d="M3 22L21.5 3.5" stroke="#5f8fd0" stroke-width="3.6"/><path d="M3 22L21.5 3.5" stroke="#cfe0f6" stroke-width="1.8"/><circle cx="3" cy="22" r="2.1" fill="#e60f0f"/><circle cx="2.5" cy="21.4" r="0.73" fill="#ff6a5a" opacity=".7"/><circle cx="21.5" cy="3.5" r="2.1" fill="#e60f0f"/><circle cx="21" cy="2.9" r="0.73" fill="#ff6a5a" opacity=".7"/><path d="M17 17H24M17 23.5H24M20.5 17V23.5" stroke="#8da0c8" stroke-width="1.5"/></svg>
<svg class="a" style="left:123px;top:112px;overflow:visible" width="9" height="5"><path d="M0 0H9L4.5 5Z" fill="#000"/></svg>
<svg class="a" style="left:139px;top:102px;overflow:visible" width="25" height="25"><polygon points="6.5,1 8.05,5.62 12.38,4.91 9.6,8.3 12.38,11.69 8.05,10.98 6.5,15.6 4.95,10.98 0.62,11.69 3.4,8.3 0.62,4.91 4.95,5.62" fill="#ffff14" stroke="#8c8450" stroke-width=".7" stroke-linejoin="miter"/><path d="M10 3.5H22L21.5 14L12.5 22.5M10 3.5V10" fill="none" stroke="#111" stroke-width="1.6"/><circle cx="10" cy="3.5" r="2.1" fill="#e60f0f"/><circle cx="9.5" cy="2.9" r="0.73" fill="#ff6a5a" opacity=".7"/><circle cx="22" cy="3.5" r="2.1" fill="#e60f0f"/><circle cx="21.5" cy="2.9" r="0.73" fill="#ff6a5a" opacity=".7"/><circle cx="10" cy="10" r="2.1" fill="#e60f0f"/><circle cx="9.5" cy="9.4" r="0.73" fill="#ff6a5a" opacity=".7"/><circle cx="21.5" cy="14" r="2.1" fill="#e60f0f"/><circle cx="21" cy="13.4" r="0.73" fill="#ff6a5a" opacity=".7"/><circle cx="12.5" cy="22.5" r="2.1" fill="#e60f0f"/><circle cx="12" cy="21.9" r="0.73" fill="#ff6a5a" opacity=".7"/></svg>
<svg class="a" style="left:169px;top:112px;overflow:visible" width="9" height="5"><path d="M0 0H9L4.5 5Z" fill="#000"/></svg>
<svg class="a" style="left:194px;top:102px;overflow:visible" width="22" height="24"><polygon points="6.2,1 7.75,5.62 12.08,4.91 9.3,8.3 12.08,11.69 7.75,10.98 6.2,15.6 4.65,10.98 0.32,11.69 3.1,8.3 0.32,4.91 4.65,5.62" fill="#ffff14" stroke="#8c8450" stroke-width=".7" stroke-linejoin="miter"/><circle cx="10.8" cy="4.2" r="2" fill="#e60f0f"/><circle cx="10.3" cy="3.6" r="0.7" fill="#ff6a5a" opacity=".7"/><polygon points="10.5,14 2,20 10,23.5" fill="#25a452"/><polygon points="10.5,14 10,23.5 19.5,20" fill="#48dc7c"/><circle cx="10.5" cy="12.5" r="4" fill="#127a30"/><circle cx="11.6" cy="11.2" r="1.5" fill="#5cc47c" opacity=".85"/></svg>
<svg class="a" style="left:225px;top:102px;overflow:visible" width="24" height="24"><polygon points="7.5,1 9.05,5.62 13.38,4.91 10.6,8.3 13.38,11.69 9.05,10.98 7.5,15.6 5.95,10.98 1.62,11.69 4.4,8.3 1.62,4.91 5.95,5.62" fill="#ffff14" stroke="#8c8450" stroke-width=".7" stroke-linejoin="miter"/><path d="M2.5 12.5H21.5" stroke="#111" stroke-width="1.6"/><circle cx="2.5" cy="12.5" r="2" fill="#e60f0f"/><circle cx="2" cy="11.9" r="0.7" fill="#ff6a5a" opacity=".7"/><circle cx="21.5" cy="12.5" r="2" fill="#e60f0f"/><circle cx="21" cy="11.9" r="0.7" fill="#ff6a5a" opacity=".7"/><polygon points="5.8,16.82 1.12,20.12 5.52,22.05" fill="#25a452"/><polygon points="5.8,16.82 5.52,22.05 10.75,20.12" fill="#48dc7c"/><circle cx="5.8" cy="16" r="2.2" fill="#127a30"/><circle cx="6.41" cy="15.29" r="0.83" fill="#5cc47c" opacity=".85"/><polygon points="17,16.82 12.32,20.12 16.73,22.05" fill="#25a452"/><polygon points="17,16.82 16.73,22.05 21.95,20.12" fill="#48dc7c"/><circle cx="17" cy="16" r="2.2" fill="#127a30"/><circle cx="17.61" cy="15.29" r="0.83" fill="#5cc47c" opacity=".85"/></svg>
<svg class="a" style="left:256px;top:102px;overflow:visible" width="24" height="24"><polygon points="7.5,1 9.05,5.62 13.38,4.91 10.6,8.3 13.38,11.69 9.05,10.98 7.5,15.6 5.95,10.98 1.62,11.69 4.4,8.3 1.62,4.91 5.95,5.62" fill="#ffff14" stroke="#8c8450" stroke-width=".7" stroke-linejoin="miter"/><path d="M4.5 14V20M9.5 15V22.5M14 14V20M18.5 15V22.5" stroke="#2fb04c" stroke-width="2.2" stroke-dasharray="1.4 1"/><path d="M2 20.8H7.5M7 23H12.5M11.5 20.8H17M16 23H21.5" stroke="#2fb04c" stroke-width="1.4"/><path d="M1.5 12.5L8 10H23L17.5 14.2H5Z" fill="#7fa6de" stroke="#4a74b4" stroke-width=".6"/><path d="M3 12.3L8.3 10.3H21" stroke="#cfe0f6" stroke-width=".8" fill="none"/></svg>
<svg class="a" style="left:295px;top:102px;overflow:visible" width="24" height="24"><polygon points="7,1 8.55,5.62 12.88,4.91 10.1,8.3 12.88,11.69 8.55,10.98 7,15.6 5.45,10.98 1.12,11.69 3.9,8.3 1.12,4.91 5.45,5.62" fill="#ffff14" stroke="#8c8450" stroke-width=".7" stroke-linejoin="miter"/><text x="8.4" y="15" font-size="11" font-weight="bold" fill="#111" font-family="Liberation Sans, sans-serif">x</text><path d="M.8 15V24M22 15V24M.8 17.6H22" stroke="#111" stroke-width="1.3" fill="none"/><path d="M1 17.6L5 15.6V19.6ZM21.8 17.6L17.8 15.6V19.6Z" fill="#111"/></svg>
<svg class="a" style="left:324px;top:112px;overflow:visible" width="9" height="5"><path d="M0 0H9L4.5 5Z" fill="#000"/></svg>
<svg class="a" style="left:341px;top:102px;overflow:visible" width="24" height="24"><polygon points="7,1 8.55,5.62 12.88,4.91 10.1,8.3 12.88,11.69 8.55,10.98 7,15.6 5.45,10.98 1.12,11.69 3.9,8.3 1.12,4.91 5.45,5.62" fill="#ffff14" stroke="#8c8450" stroke-width=".7" stroke-linejoin="miter"/><text x="8" y="15" font-size="11" font-weight="bold" fill="#111" font-family="Liberation Sans, sans-serif" letter-spacing=".6">xx</text><path d="M22.5 17.5H8L2 23.5" stroke="#111" stroke-width="1.4" fill="none"/><path d="M.8 24.2L1.8 19L6.4 23.4Z" fill="#111"/></svg>
<svg class="a" style="left:380px;top:102px;overflow:visible" width="24" height="24"><polygon points="7,1 8.55,5.62 12.88,4.91 10.1,8.3 12.88,11.69 8.55,10.98 7,15.6 5.45,10.98 1.12,11.69 3.9,8.3 1.12,4.91 5.45,5.62" fill="#ffff14" stroke="#8c8450" stroke-width=".7" stroke-linejoin="miter"/><rect x="5.5" y="10.5" width="16" height="12" rx="1" fill="#7fa6de" stroke="#4a74b4" stroke-width="1"/><circle cx="5.5" cy="11" r="2.1" fill="#e60f0f"/><circle cx="5" cy="10.4" r="0.73" fill="#ff6a5a" opacity=".7"/><circle cx="21.5" cy="22" r="2.1" fill="#e60f0f"/><circle cx="21" cy="21.4" r="0.73" fill="#ff6a5a" opacity=".7"/></svg>
<svg class="a" style="left:409px;top:112px;overflow:visible" width="9" height="5"><path d="M0 0H9L4.5 5Z" fill="#000"/></svg>
<svg class="a" style="left:426px;top:102px;overflow:visible" width="25" height="25"><polygon points="7.5,1 9.05,5.62 13.38,4.91 10.6,8.3 13.38,11.69 9.05,10.98 7.5,15.6 5.95,10.98 1.62,11.69 4.4,8.3 1.62,4.91 5.95,5.62" fill="#ffff14" stroke="#8c8450" stroke-width=".7" stroke-linejoin="miter"/><path d="M6 10Q14 6 20.5 14Q20 19 17 22.5Q13.5 20 8.5 22.5Q11.5 16 6 10Z" fill="#7fa6de" stroke="#3e68a8" stroke-width="1"/><circle cx="4.5" cy="6.5" r="1.7" fill="#e60f0f"/><circle cx="4" cy="5.9" r="0.59" fill="#ff6a5a" opacity=".7"/><circle cx="7.5" cy="12.5" r="1.8" fill="#e60f0f"/><circle cx="7" cy="11.9" r="0.63" fill="#ff6a5a" opacity=".7"/><circle cx="12" cy="16.5" r="1.8" fill="#e60f0f"/><circle cx="11.5" cy="15.9" r="0.63" fill="#ff6a5a" opacity=".7"/><circle cx="21" cy="14.5" r="1.8" fill="#e60f0f"/><circle cx="20.5" cy="13.9" r="0.63" fill="#ff6a5a" opacity=".7"/><circle cx="13" cy="9.5" r="1.6" fill="#e60f0f"/><circle cx="12.5" cy="8.9" r="0.56" fill="#ff6a5a" opacity=".7"/></svg>
<svg class="a" style="left:455px;top:112px;overflow:visible" width="9" height="5"><path d="M0 0H9L4.5 5Z" fill="#000"/></svg>
<svg class="a" style="left:472px;top:102px;overflow:visible" width="24" height="24"><polygon points="6,1 7.55,5.62 11.88,4.91 9.1,8.3 11.88,11.69 7.55,10.98 6,15.6 4.45,10.98 0.12,11.69 2.9,8.3 0.12,4.91 4.45,5.62" fill="#ffff14" stroke="#8c8450" stroke-width=".7" stroke-linejoin="miter"/><rect x="6.5" y="6" width="14" height="15.5" fill="none" stroke="#5f8ace" stroke-width="3.6"/><rect x="6.5" y="6" width="14" height="15.5" fill="none" stroke="#3e68a8" stroke-width=".8" transform="translate(-1.8 -1.8) scale(1.13)" opacity=".0"/><circle cx="6.5" cy="6.5" r="2.1" fill="#e60f0f"/><circle cx="6" cy="5.9" r="0.73" fill="#ff6a5a" opacity=".7"/><circle cx="20.5" cy="6.5" r="2.1" fill="#e60f0f"/><circle cx="20" cy="5.9" r="0.73" fill="#ff6a5a" opacity=".7"/><circle cx="6.5" cy="21" r="2.1" fill="#e60f0f"/><circle cx="6" cy="20.4" r="0.73" fill="#ff6a5a" opacity=".7"/><circle cx="20.5" cy="21" r="2.1" fill="#e60f0f"/><circle cx="20" cy="20.4" r="0.73" fill="#ff6a5a" opacity=".7"/></svg>
<svg class="a" style="left:501px;top:112px;overflow:visible" width="9" height="5"><path d="M0 0H9L4.5 5Z" fill="#000"/></svg>
<svg class="a" style="left:518px;top:102px;overflow:visible" width="25" height="25"><polygon points="7,1 8.55,5.62 12.88,4.91 10.1,8.3 12.88,11.69 8.55,10.98 7,15.6 5.45,10.98 1.12,11.69 3.9,8.3 1.12,4.91 5.45,5.62" fill="#ffff14" stroke="#8c8450" stroke-width=".7" stroke-linejoin="miter"/><path d="M3.5 10.5L12 13.5V23L3.5 19.5Z" fill="#8fb2e4" stroke="#3e68a8" stroke-width=".9"/><path d="M12 13.5L20.5 4.5V14L12 23Z" fill="#6f97d6" stroke="#3e68a8" stroke-width=".9"/><path d="M20.5 1V6M18.8 3.5L20.5 .6L22.2 3.5" stroke="#2c4f8c" stroke-width="1.1" fill="none"/><circle cx="3.5" cy="19.5" r="1.8" fill="#e60f0f"/><circle cx="3" cy="18.9" r="0.63" fill="#ff6a5a" opacity=".7"/><circle cx="12" cy="23" r="1.8" fill="#e60f0f"/><circle cx="11.5" cy="22.4" r="0.63" fill="#ff6a5a" opacity=".7"/><circle cx="20.5" cy="14" r="1.8" fill="#e60f0f"/><circle cx="20" cy="13.4" r="0.63" fill="#ff6a5a" opacity=".7"/><circle cx="8" cy="13.5" r="1.5" fill="#e60f0f"/><circle cx="7.5" cy="12.9" r="0.52" fill="#ff6a5a" opacity=".7"/></svg>
<svg class="a" style="left:547px;top:112px;overflow:visible" width="9" height="5"><path d="M0 0H9L4.5 5Z" fill="#000"/></svg>
<svg class="a" style="left:563px;top:102px;overflow:visible" width="25" height="25"><path d="M3.5 8.5H17V22H3.5Z" fill="#8fb8ea" stroke="#4a74b4" stroke-width=".8"/><path d="M17 8.5L22 5.5V18.5L17 22Z" fill="#5f8ace"/><path d="M3.5 8.5L8.5 5.5H22L17 8.5Z" fill="#b4d0f2"/><rect x="10.85" y="1.15" width="12.8" height="8.8" fill="#eee" stroke="#6c6c6c" stroke-width="1.7"/><rect x="11.7" y="2" width="11.1" height="2.7" fill="#3a52d2"/><rect x="12.2" y="2.5" width="1.6" height="1.5" fill="#f2f2f2"/><polygon points="5.2,0.4 6.2,4.27 9.71,3.4 7.2,6 9.71,8.6 6.2,7.73 5.2,11.6 4.2,7.73 0.69,8.6 3.2,6 0.69,3.4 4.2,4.27" fill="#ffff14" stroke="#8c8450" stroke-width=".7" stroke-linejoin="miter"/></svg>
<svg class="a" style="left:603px;top:102px;overflow:visible" width="18" height="24"><polygon points="6.5,1 8.05,5.62 12.38,4.91 9.6,8.3 12.38,11.69 8.05,10.98 6.5,15.6 4.95,10.98 0.62,11.69 3.4,8.3 0.62,4.91 4.95,5.62" fill="#ffff14" stroke="#8c8450" stroke-width=".7" stroke-linejoin="miter"/><path d="M11 2.5V13" stroke="#5f86c6" stroke-width="3"/><path d="M11 3V12.5" stroke="#b4ccf0" stroke-width="1.7"/><path d="M7.8 11.5L14.2 11.5L11 16.5Z" fill="#6f96d6"/><circle cx="11" cy="20.5" r="2" fill="#e60f0f"/><circle cx="10.5" cy="19.9" r="0.7" fill="#ff6a5a" opacity=".7"/></svg>
<svg class="a" style="left:633px;top:102px;overflow:visible" width="24" height="24"><polygon points="7.5,1 9.05,5.62 13.38,4.91 10.6,8.3 13.38,11.69 9.05,10.98 7.5,15.6 5.95,10.98 1.62,11.69 4.4,8.3 1.62,4.91 5.95,5.62" fill="#ffff14" stroke="#8c8450" stroke-width=".7" stroke-linejoin="miter"/><path d="M7.5 6.8H22" stroke="#5f86c6" stroke-width="2.6"/><path d="M8 6.8H21.5" stroke="#b4ccf0" stroke-width="1.2"/><path d="M8.8 6.5V13.5" stroke="#5f86c6" stroke-width="3"/><path d="M8.8 7V13" stroke="#b4ccf0" stroke-width="1.7"/><path d="M5.6 12L12 12L8.8 17Z" fill="#6f96d6"/><path d="M14.6 6.5V13.5" stroke="#5f86c6" stroke-width="3"/><path d="M14.6 7V13" stroke="#b4ccf0" stroke-width="1.7"/><path d="M11.4 12L17.8 12L14.6 17Z" fill="#6f96d6"/><path d="M20.6 6.5V13.5" stroke="#5f86c6" stroke-width="3"/><path d="M20.6 7V13" stroke="#b4ccf0" stroke-width="1.7"/><path d="M17.4 12L23.8 12L20.6 17Z" fill="#6f96d6"/><path d="M3 20.5H21" stroke="#111" stroke-width="1.5"/><circle cx="3" cy="20.5" r="1.9" fill="#e60f0f"/><circle cx="2.5" cy="19.9" r="0.66" fill="#ff6a5a" opacity=".7"/><circle cx="21" cy="20.5" r="1.9" fill="#e60f0f"/><circle cx="20.5" cy="19.9" r="0.66" fill="#ff6a5a" opacity=".7"/></svg>
<svg class="a" style="left:664px;top:102px;overflow:visible" width="24" height="24"><polygon points="7.5,1 9.05,5.62 13.38,4.91 10.6,8.3 13.38,11.69 9.05,10.98 7.5,15.6 5.95,10.98 1.62,11.69 4.4,8.3 1.62,4.91 5.95,5.62" fill="#ffff14" stroke="#8c8450" stroke-width=".7" stroke-linejoin="miter"/><path d="M7.5 6.8H22" stroke="#5f86c6" stroke-width="2.6"/><path d="M8 6.8H21.5" stroke="#b4ccf0" stroke-width="1.2"/><path d="M8.8 6.5V13.5" stroke="#5f86c6" stroke-width="3"/><path d="M8.8 7V13" stroke="#b4ccf0" stroke-width="1.7"/><path d="M5.6 12L12 12L8.8 17Z" fill="#6f96d6"/><path d="M14.6 6.5V13.5" stroke="#5f86c6" stroke-width="3"/><path d="M14.6 7V13" stroke="#b4ccf0" stroke-width="1.7"/><path d="M11.4 12L17.8 12L14.6 17Z" fill="#6f96d6"/><path d="M20.6 6.5V13.5" stroke="#5f86c6" stroke-width="3"/><path d="M20.6 7V13" stroke="#b4ccf0" stroke-width="1.7"/><path d="M17.4 12L23.8 12L20.6 17Z" fill="#6f96d6"/><path d="M3 20.5H21" stroke="#6f97d6" stroke-width="3.4"/><path d="M3 20.5H21" stroke="#cfe0f6" stroke-width="1.5"/><circle cx="3" cy="20.5" r="1.9" fill="#e60f0f"/><circle cx="2.5" cy="19.9" r="0.66" fill="#ff6a5a" opacity=".7"/><circle cx="21" cy="20.5" r="1.9" fill="#e60f0f"/><circle cx="20.5" cy="19.9" r="0.66" fill="#ff6a5a" opacity=".7"/></svg>
<svg class="a" style="left:695px;top:102px;overflow:visible" width="25" height="25"><polygon points="7,1 8.55,5.62 12.88,4.91 10.1,8.3 12.88,11.69 8.55,10.98 7,15.6 5.45,10.98 1.12,11.69 3.9,8.3 1.12,4.91 5.45,5.62" fill="#ffff14" stroke="#8c8450" stroke-width=".7" stroke-linejoin="miter"/><path d="M5 18.5L10 15.5H21.5L17 18.5ZM5 18.5V23.5H17V18.5M17 23.5L21.5 20.5V15.5" fill="#a8c4ec" fill-opacity=".6" stroke="#5f8ace" stroke-width="1.1"/><path d="M10 15.5V6.5H21.5V15.5M5 9.5L10 6.5M17 9.5L21.5 6.5M5 9.5H17V18.5M5 9.5V18.5" fill="none" stroke="#5f8ace" stroke-width="1.2"/><path d="M8.5 8V13.5" stroke="#5f86c6" stroke-width="3"/><path d="M8.5 8.5V13" stroke="#b4ccf0" stroke-width="1.7"/><path d="M5.3 12L11.7 12L8.5 17Z" fill="#6f96d6"/><path d="M13.5 8V13.5" stroke="#5f86c6" stroke-width="3"/><path d="M13.5 8.5V13" stroke="#b4ccf0" stroke-width="1.7"/><path d="M10.3 12L16.7 12L13.5 17Z" fill="#6f96d6"/><path d="M19 7V12.5" stroke="#5f86c6" stroke-width="3"/><path d="M19 7.5V12" stroke="#b4ccf0" stroke-width="1.7"/><path d="M15.8 11L22.2 11L19 16Z" fill="#6f96d6"/><circle cx="2.5" cy="21" r="1.5" fill="#e60f0f"/><circle cx="2" cy="20.4" r="0.52" fill="#ff6a5a" opacity=".7"/><circle cx="13" cy="23.5" r="1.5" fill="#e60f0f"/><circle cx="12.5" cy="22.9" r="0.52" fill="#ff6a5a" opacity=".7"/><circle cx="21.5" cy="20" r="1.5" fill="#e60f0f"/><circle cx="21" cy="19.4" r="0.52" fill="#ff6a5a" opacity=".7"/></svg>
<svg class="a" style="left:727px;top:102px;overflow:visible" width="25" height="25"><polygon points="6.5,1 8.05,5.62 12.38,4.91 9.6,8.3 12.38,11.69 8.05,10.98 6.5,15.6 4.95,10.98 0.62,11.69 3.4,8.3 0.62,4.91 4.95,5.62" fill="#ffff14" stroke="#8c8450" stroke-width=".7" stroke-linejoin="miter"/><path d="M4.5 3Q5 17 15.5 23" fill="none" stroke="#18a048" stroke-width="1.8"/><path d="M8 3L14.5 23" stroke="#111" stroke-width="1.6"/><path d="M14.5 1V23.5" stroke="#111" stroke-width="1.4" stroke-dasharray="2.6 1.6"/><path d="M17 17H24M17 23.5H24M20.5 17V23.5" stroke="#444" stroke-width="1.5"/></svg>
<svg class="a" style="left:756px;top:112px;overflow:visible" width="9" height="5"><path d="M0 0H9L4.5 5Z" fill="#000"/></svg>
<svg class="a" style="left:772px;top:102px;overflow:visible" width="24" height="24"><polygon points="6.5,1 8.05,5.62 12.38,4.91 9.6,8.3 12.38,11.69 8.05,10.98 6.5,15.6 4.95,10.98 0.62,11.69 3.4,8.3 0.62,4.91 4.95,5.62" fill="#ffff14" stroke="#8c8450" stroke-width=".7" stroke-linejoin="miter"/><path d="M10 3V13" stroke="#5f86c6" stroke-width="3"/><path d="M10 3.5V12.5" stroke="#b4ccf0" stroke-width="1.7"/><path d="M6.8 11.5L13.2 11.5L10 16.5Z" fill="#6f96d6"/><path d="M2 16.5L18 11.5L20.5 19L5 24Z" fill="none" stroke="#1a9ae0" stroke-width="1.7" stroke-dasharray="2.2 1.6"/></svg>
<svg class="a" style="left:802px;top:112px;overflow:visible" width="9" height="5"><path d="M0 0H9L4.5 5Z" fill="#000"/></svg>
<svg class="a" style="left:832px;top:102px;overflow:visible" width="24" height="24"><path d="M.5 7H15.5L10.5 14V23L6.5 20.5V14Z" fill="#7a9fd6"/><path d="M.5 7H15.5L13.2 10H2.6Z" fill="#5b84c4"/><rect x="10.85" y="1.35" width="11.8" height="8.8" fill="#eee" stroke="#6c6c6c" stroke-width="1.7"/><rect x="11.7" y="2.2" width="10.1" height="2.7" fill="#3a52d2"/><rect x="12.2" y="2.7" width="1.6" height="1.5" fill="#f2f2f2"/></svg>
<svg class="a" style="left:871px;top:105px;overflow:visible" width="24" height="22"><g transform="scale(1.18) translate(-.2 -1.5)"><path d="M4.2 3.7Q-2.4 9.3 4.2 14.9" fill="none" stroke="#555" stroke-width=".8"/><path d="M15.4 3.7Q22 9.3 15.4 14.9" fill="none" stroke="#555" stroke-width=".8"/><path d="M4.2 4Q9.8 9.6 15.4 4" fill="none" stroke="#555" stroke-width=".8"/><path d="M4.2 14.9V3.7H15.4V14.9" fill="none" stroke="#111" stroke-width="1.35"/><circle cx="4.2" cy="3.7" r="1.45" fill="#e01212"/><circle cx="15.4" cy="3.7" r="1.45" fill="#e01212"/><circle cx="4.2" cy="14.9" r="1.45" fill="#e01212"/><circle cx="15.4" cy="14.9" r="1.45" fill="#e01212"/></g></svg>
<svg class="a" style="left:902px;top:104px;overflow:visible" width="24" height="24"><g transform="scale(1.2) translate(-.3 -1.2)"><path d="M4.2 11Q10 25.5 15.8 11Z" fill="#c4c4f6" stroke="#2222f4" stroke-width="1.2"/><path d="M.6 10.6L2 2.6L4.4 10.6Z" fill="#ff6060" stroke="#f01010" stroke-width="1" stroke-linejoin="round"/><path d="M19.4 10.6L18 2.6L15.6 10.6Z" fill="#ff6060" stroke="#f01010" stroke-width="1" stroke-linejoin="round"/><rect x=".2" y="9.6" width="19.6" height="2" fill="#a9c1dc"/><circle cx=".9" cy="10.6" r="1.1" fill="#f02020"/><circle cx="19.1" cy="10.6" r="1.1" fill="#f02020"/></g></svg>
<svg class="a" style="left:933px;top:105.3px;overflow:visible" width="24" height="22"><g transform="scale(1.2) translate(-.3 -1.8)"><defs><radialGradient id="rbw1" gradientUnits="userSpaceOnUse" cx="15.4" cy="17.2" r="15.5"><stop offset="0" stop-color="#d80000"/><stop offset=".14" stop-color="#f02000"/><stop offset=".26" stop-color="#ff9800"/><stop offset=".38" stop-color="#f8f000"/><stop offset=".52" stop-color="#40e020"/><stop offset=".66" stop-color="#10d8c0"/><stop offset=".8" stop-color="#10a0f0"/><stop offset=".95" stop-color="#1030d0"/></radialGradient></defs><path d="M.9 10L8.7 4.7Q14 5 19.3 6.7L15.2 16.3Q9 12 .9 10Z" fill="url(#rbw1)"/></g></svg>
<svg class="a" style="left:964px;top:102px;overflow:visible" width="24" height="24"><path d="M1 5.5L13 2L23 5V18.5L12 23.5L1 19Z" fill="#9a9a9a"/><path d="M1 5.5L12 8.5V23.5L1 19Z" fill="#bdbdbd"/><path d="M12 8.5L23 5V18.5L12 23.5Z" fill="#8e8e8e"/><path d="M1 5.5L13 2L23 5L12 8.5Z" fill="#d6d6d6"/><ellipse cx="6.5" cy="14.5" rx="3.6" ry="4.6" fill="#e6e6e6"/><ellipse cx="6.5" cy="14.5" rx="1.7" ry="2.3" fill="#9a9a9a"/><ellipse cx="17.5" cy="14" rx="3.4" ry="4.6" fill="#c6c6c6"/><ellipse cx="17.5" cy="14" rx="1.5" ry="2.2" fill="#7e7e7e"/></svg>
<svg class="a" style="left:996.5px;top:105px;overflow:visible" width="24" height="24"><g transform="scale(1.08) translate(-.2 -.2)"><path d="M7.1 3.5L2 8.8L8.7 10.5L12.5 8.1Z" fill="#3cbc5c"/><path d="M7.1 3.5L8.7 10.5L12.5 8.1Z" fill="#6ad884"/><path d="M7.1 3.5L2 8.8L8.7 10.5Z" fill="#2a9a48"/><circle cx="7.1" cy="2.9" r="2.6" fill="#14682a"/><circle cx="6.4" cy="2.1" r=".9" fill="#58b070"/><path d="M20 1.9H15.5V-.1L12.1 3.1L15.5 6.4V4.5H20Z" fill="#40e074" stroke="#1a7a34" stroke-width=".7" stroke-linejoin="round"/><path d="M5.6 19.3V15.5H3.7L7 11.7L10.3 15.5H8.4V19.3Z" fill="#40e074" stroke="#1a7a34" stroke-width=".7" stroke-linejoin="round"/></g></svg>
<div class="a" style="left:1022px;top:100px;width:30px;height:28px;background:#cce4f7;border:1px solid #99cdf5;box-sizing:border-box"></div>
<svg class="a" style="left:1026px;top:105.2px;overflow:visible" width="24" height="22"><g transform="scale(1.2) translate(-.4 -1)"><defs><linearGradient id="bl2" x1="0" y1="0" x2=".4" y2="1"><stop offset="0" stop-color="#3e62ee"/><stop offset="1" stop-color="#6f8cf6"/></linearGradient></defs><path d="M.8 14L6.6 11.1" stroke="#4a7898" stroke-width="1.6"/><path d="M6 10.2L19.4 3.4Q16 10.6 8.6 14.6Z" fill="url(#bl2)"/></g></svg>
<svg class="a" style="left:1066px;top:102px;overflow:visible" width="22" height="24"><path d="M3 7.5H19" stroke="#666" stroke-width="1.3"/><circle cx="3" cy="7.5" r="1.8" fill="#888"/><circle cx="19" cy="7.5" r="1.8" fill="#888"/><path d="M1 18Q6 11 11 18T21 18" fill="none" stroke="#666" stroke-width="1.3"/><path d="M1 18H21" stroke="#777" stroke-width=".9"/></svg>
<svg class="a" style="left:1097px;top:102px;overflow:visible" width="22" height="24"><path d="M3 7.5H19" stroke="#bdbdbd" stroke-width="4" stroke-linecap="round"/><path d="M3 7.5H19" stroke="#e6e6e6" stroke-width="1.6"/><circle cx="3" cy="7.5" r="1.8" fill="#999"/><circle cx="19" cy="7.5" r="1.8" fill="#999"/><path d="M1 18Q6 11 11 18T21 18" fill="none" stroke="#666" stroke-width="1.3"/><path d="M1 18H21" stroke="#777" stroke-width=".9"/></svg>
<svg class="a" style="left:1132px;top:109px;overflow:visible" width="9" height="8"><path d="M.8 .8L3.6 4L.8 7.2M5 .8L7.8 4L5 7.2" stroke="#444" stroke-width="1.1" fill="none"/></svg>
<div class="a" style="left:1156px;top:102px;width:150px;height:24px;background:#e6e6f2"></div><div class="a" style="left:1161px;top:107px;width:14px;height:14px;background:#ccffff"></div>
<div class="t" style="left:1182.00px;top:104.64px;font-size:13.5px;line-height:19px;letter-spacing:-0.424px;color:#000;">1 - Global XYZ</div>
<svg class="a" style="left:1292px;top:110px;overflow:visible" width="10" height="7"><path d="M.6 .8L4.8 5L9 .8" stroke="#555" stroke-width="1.1" fill="none"/></svg>
<svg class="a" style="left:1312px;top:109px;overflow:visible" width="9" height="8"><path d="M.8 .8L3.6 4L.8 7.2M5 .8L7.8 4L5 7.2" stroke="#444" stroke-width="1.1" fill="none"/></svg>
<svg class="a" style="left:1341px;top:104px;overflow:visible" width="21" height="21"><rect x=".5" y=".5" width="20" height="20" fill="#9c9c9c" stroke="#5a5a5a"/><rect x="1" y="1" width="19" height="3" fill="#2b3fa6"/><path d="M1 6.5H20" stroke="#e8e8e8" stroke-width=".9"/><path d="M1 9.8H20" stroke="#e8e8e8" stroke-width=".9"/><path d="M1 13.1H20" stroke="#e8e8e8" stroke-width=".9"/><path d="M1 16.4H20" stroke="#e8e8e8" stroke-width=".9"/><path d="M1 19.7H20" stroke="#e8e8e8" stroke-width=".9"/><path d="M5 4V21" stroke="#e8e8e8" stroke-width=".9"/><path d="M9 4V21" stroke="#e8e8e8" stroke-width=".9"/><path d="M13 4V21" stroke="#e8e8e8" stroke-width=".9"/><path d="M17 4V21" stroke="#e8e8e8" stroke-width=".9"/><path d="M4.5 19.5H19.5V5.5Z" fill="#a8eaa0" stroke="#2a8a2a" stroke-width="1.2"/><path d="M11 17H17V11.5Z" fill="#f4f4f4" stroke="#2a8a2a" stroke-width=".9"/></svg>
<svg class="a" style="left:1369px;top:112px;overflow:visible" width="9" height="5"><path d="M0 0H9L4.5 5Z" fill="#000"/></svg>
<svg class="a" style="left:1387px;top:109px;overflow:visible" width="9" height="8"><path d="M.8 .8L3.6 4L.8 7.2M5 .8L7.8 4L5 7.2" stroke="#444" stroke-width="1.1" fill="none"/></svg>
<div class="a" style="left:324px;top:132px;width:1074px;height:890px;background:#fff;"></div>
<div class="t" style="left:329.20px;top:137.78px;font-size:14.9px;line-height:21px;letter-spacing:-0.803px;color:#000;">LK1 - LF1</div>
<svg width="1400" height="1050" viewBox="0 0 1400 1050" style="position:absolute;left:0;top:0" font-family="Liberation Sans, sans-serif">
<defs><filter id="sh" x="-20%" y="-20%" width="140%" height="140%"><feGaussianBlur stdDeviation="1.8"/></filter></defs>
<polygon points="527.4,202.1 667.75,223.1 667.75,402.1 527.4,381.1" fill="#e2e6ef" stroke="none"/>
<line x1="527.4" y1="202.1" x2="667.75" y2="223.1" stroke="#90a8c9" stroke-width="1"/>
<line x1="527.4" y1="381.1" x2="667.75" y2="402.1" stroke="#b6c5db" stroke-width="1"/>
<line x1="527.4" y1="202.1" x2="527.4" y2="376.1" stroke="#90a8c9" stroke-width="1"/>
<polygon points="524.4,373.7 530.4,373.7 527.4,381.1" fill="#86a1c6"/>
<line x1="550.79" y1="205.6" x2="550.79" y2="379.6" stroke="#90a8c9" stroke-width="1"/>
<polygon points="547.79,377.2 553.79,377.2 550.79,384.6" fill="#86a1c6"/>
<line x1="574.18" y1="209.1" x2="574.18" y2="383.1" stroke="#90a8c9" stroke-width="1"/>
<polygon points="571.18,380.7 577.18,380.7 574.18,388.1" fill="#86a1c6"/>
<line x1="597.57" y1="212.6" x2="597.57" y2="386.6" stroke="#90a8c9" stroke-width="1"/>
<polygon points="594.57,384.2 600.57,384.2 597.57,391.6" fill="#86a1c6"/>
<line x1="620.97" y1="216.1" x2="620.97" y2="390.1" stroke="#90a8c9" stroke-width="1"/>
<polygon points="617.97,387.7 623.97,387.7 620.97,395.1" fill="#86a1c6"/>
<line x1="644.36" y1="219.6" x2="644.36" y2="393.6" stroke="#90a8c9" stroke-width="1"/>
<polygon points="641.36,391.2 647.36,391.2 644.36,398.6" fill="#86a1c6"/>
<line x1="667.75" y1="223.1" x2="667.75" y2="397.1" stroke="#90a8c9" stroke-width="1"/>
<polygon points="664.75,394.7 670.75,394.7 667.75,402.1" fill="#86a1c6"/>
<circle cx="597.57" cy="212.6" r="1.6" fill="#86a1c6"/>
<polygon points="534.6,399.38 660.55,418.22 660.55,559.22 534.6,540.38" fill="none" stroke="#a3c4ee" stroke-width="1" stroke-dasharray="10 5"/>
<line x1="527.4" y1="468.8" x2="667.75" y2="489.8" stroke="#a9a9a9" stroke-width="2"/>
<line x1="527.4" y1="391.1" x2="527.4" y2="546.5" stroke="#5a5a5a" stroke-width="1"/>
<line x1="667.75" y1="412.1" x2="667.75" y2="567.5" stroke="#000" stroke-width="1.15"/>
<line x1="527.4" y1="391.1" x2="667.75" y2="412.1" stroke="#5c5c5c" stroke-width="1.05"/>
<line x1="527.4" y1="391.1" x2="667.75" y2="412.1" stroke="#000" stroke-width="1.15" stroke-dasharray="3.4 3.4"/>
<line x1="527.4" y1="546.5" x2="667.75" y2="567.5" stroke="#5c5c5c" stroke-width="1.05"/>
<line x1="527.4" y1="546.5" x2="667.75" y2="567.5" stroke="#000" stroke-width="1.15" stroke-dasharray="3.4 3.4"/>
<polygon points="702.6,250.6 913.12,282.1 913.12,439.1 702.6,407.6" fill="#e2e6ef" stroke="none"/>
<line x1="702.6" y1="250.6" x2="913.12" y2="282.1" stroke="#90a8c9" stroke-width="1"/>
<line x1="702.6" y1="407.6" x2="913.12" y2="439.1" stroke="#b6c5db" stroke-width="1"/>
<line x1="702.6" y1="250.6" x2="702.6" y2="402.6" stroke="#90a8c9" stroke-width="1"/>
<polygon points="699.6,400.2 705.6,400.2 702.6,407.6" fill="#86a1c6"/>
<line x1="728.92" y1="254.54" x2="728.92" y2="406.54" stroke="#90a8c9" stroke-width="1"/>
<polygon points="725.92,404.14 731.92,404.14 728.92,411.54" fill="#86a1c6"/>
<line x1="755.23" y1="258.48" x2="755.23" y2="410.48" stroke="#90a8c9" stroke-width="1"/>
<polygon points="752.23,408.08 758.23,408.08 755.23,415.48" fill="#86a1c6"/>
<line x1="781.55" y1="262.41" x2="781.55" y2="414.41" stroke="#90a8c9" stroke-width="1"/>
<polygon points="778.55,412.01 784.55,412.01 781.55,419.41" fill="#86a1c6"/>
<line x1="807.86" y1="266.35" x2="807.86" y2="418.35" stroke="#90a8c9" stroke-width="1"/>
<polygon points="804.86,415.95 810.86,415.95 807.86,423.35" fill="#86a1c6"/>
<line x1="834.18" y1="270.29" x2="834.18" y2="422.29" stroke="#90a8c9" stroke-width="1"/>
<polygon points="831.18,419.89 837.18,419.89 834.18,427.29" fill="#86a1c6"/>
<line x1="860.49" y1="274.23" x2="860.49" y2="426.23" stroke="#90a8c9" stroke-width="1"/>
<polygon points="857.49,423.83 863.49,423.83 860.49,431.23" fill="#86a1c6"/>
<line x1="886.81" y1="278.16" x2="886.81" y2="430.16" stroke="#90a8c9" stroke-width="1"/>
<polygon points="883.81,427.76 889.81,427.76 886.81,435.16" fill="#86a1c6"/>
<line x1="913.12" y1="282.1" x2="913.12" y2="434.1" stroke="#90a8c9" stroke-width="1"/>
<polygon points="910.12,431.7 916.12,431.7 913.12,439.1" fill="#86a1c6"/>
<circle cx="807.86" cy="266.35" r="1.6" fill="#86a1c6"/>
<polygon points="710.8,428.83 904.92,457.87 904.92,593.27 710.8,564.23" fill="none" stroke="#a3c4ee" stroke-width="1" stroke-dasharray="10 5"/>
<line x1="702.6" y1="495.3" x2="913.12" y2="526.8" stroke="#a9a9a9" stroke-width="2"/>
<line x1="702.6" y1="417.6" x2="702.6" y2="573" stroke="#000" stroke-width="1.15"/>
<line x1="913.12" y1="449.1" x2="913.12" y2="604.5" stroke="#a9a9a9" stroke-width="2"/>
<line x1="702.6" y1="417.6" x2="913.12" y2="449.1" stroke="#5c5c5c" stroke-width="1.05"/>
<line x1="702.6" y1="417.6" x2="913.12" y2="449.1" stroke="#000" stroke-width="1.15" stroke-dasharray="3.4 3.4"/>
<line x1="702.6" y1="573" x2="913.12" y2="604.5" stroke="#5c5c5c" stroke-width="1.05"/>
<line x1="702.6" y1="573" x2="913.12" y2="604.5" stroke="#000" stroke-width="1.15" stroke-dasharray="3.4 3.4"/>
<polygon points="948.1,332.4 1228.8,374.4 1228.8,485.9 948.1,443.9" fill="#e2e6ef" stroke="none"/>
<line x1="948.1" y1="332.4" x2="1228.8" y2="374.4" stroke="#90a8c9" stroke-width="1"/>
<line x1="948.1" y1="443.9" x2="1228.8" y2="485.9" stroke="#b6c5db" stroke-width="1"/>
<line x1="948.1" y1="332.4" x2="948.1" y2="438.9" stroke="#90a8c9" stroke-width="1"/>
<polygon points="945.1,436.5 951.1,436.5 948.1,443.9" fill="#86a1c6"/>
<line x1="976.17" y1="336.6" x2="976.17" y2="443.1" stroke="#90a8c9" stroke-width="1"/>
<polygon points="973.17,440.7 979.17,440.7 976.17,448.1" fill="#86a1c6"/>
<line x1="1004.24" y1="340.8" x2="1004.24" y2="447.3" stroke="#90a8c9" stroke-width="1"/>
<polygon points="1001.24,444.9 1007.24,444.9 1004.24,452.3" fill="#86a1c6"/>
<line x1="1032.31" y1="345" x2="1032.31" y2="451.5" stroke="#90a8c9" stroke-width="1"/>
<polygon points="1029.31,449.1 1035.31,449.1 1032.31,456.5" fill="#86a1c6"/>
<line x1="1060.38" y1="349.2" x2="1060.38" y2="455.7" stroke="#90a8c9" stroke-width="1"/>
<polygon points="1057.38,453.3 1063.38,453.3 1060.38,460.7" fill="#86a1c6"/>
<line x1="1088.45" y1="353.4" x2="1088.45" y2="459.9" stroke="#90a8c9" stroke-width="1"/>
<polygon points="1085.45,457.5 1091.45,457.5 1088.45,464.9" fill="#86a1c6"/>
<line x1="1116.52" y1="357.6" x2="1116.52" y2="464.1" stroke="#90a8c9" stroke-width="1"/>
<polygon points="1113.52,461.7 1119.52,461.7 1116.52,469.1" fill="#86a1c6"/>
<line x1="1144.59" y1="361.8" x2="1144.59" y2="468.3" stroke="#90a8c9" stroke-width="1"/>
<polygon points="1141.59,465.9 1147.59,465.9 1144.59,473.3" fill="#86a1c6"/>
<line x1="1172.66" y1="366" x2="1172.66" y2="472.5" stroke="#90a8c9" stroke-width="1"/>
<polygon points="1169.66,470.1 1175.66,470.1 1172.66,477.5" fill="#86a1c6"/>
<line x1="1200.73" y1="370.2" x2="1200.73" y2="476.7" stroke="#90a8c9" stroke-width="1"/>
<polygon points="1197.73,474.3 1203.73,474.3 1200.73,481.7" fill="#86a1c6"/>
<line x1="1228.8" y1="374.4" x2="1228.8" y2="480.9" stroke="#90a8c9" stroke-width="1"/>
<polygon points="1225.8,478.5 1231.8,478.5 1228.8,485.9" fill="#86a1c6"/>
<circle cx="1088.45" cy="353.4" r="1.6" fill="#86a1c6"/>
<polygon points="958.6,465.97 1218.3,504.83 1218.3,639.23 958.6,600.37" fill="none" stroke="#a3c4ee" stroke-width="1" stroke-dasharray="10 5"/>
<line x1="948.1" y1="531.6" x2="1228.8" y2="573.6" stroke="#a9a9a9" stroke-width="2"/>
<line x1="948.1" y1="453.9" x2="948.1" y2="609.3" stroke="#a9a9a9" stroke-width="2"/>
<line x1="1228.8" y1="495.9" x2="1228.8" y2="651.3" stroke="#000" stroke-width="1.15"/>
<line x1="948.1" y1="453.9" x2="1228.8" y2="495.9" stroke="#5c5c5c" stroke-width="1.05"/>
<line x1="948.1" y1="453.9" x2="1228.8" y2="495.9" stroke="#000" stroke-width="1.15" stroke-dasharray="3.4 3.4"/>
<line x1="948.1" y1="609.3" x2="1228.8" y2="651.3" stroke="#5c5c5c" stroke-width="1.05"/>
<line x1="948.1" y1="609.3" x2="1228.8" y2="651.3" stroke="#000" stroke-width="1.15" stroke-dasharray="3.4 3.4"/>
<polygon points="527.1,643.6 1228.85,748.6 1228.85,767.8 527.1,662.8" fill="#e2e6ef" stroke="none"/>
<line x1="527.1" y1="643.6" x2="1228.85" y2="748.6" stroke="#90a8c9" stroke-width="1"/>
<line x1="527.1" y1="662.8" x2="1228.85" y2="767.8" stroke="#b6c5db" stroke-width="1"/>
<line x1="527.1" y1="643.6" x2="527.1" y2="657.8" stroke="#90a8c9" stroke-width="1"/>
<polygon points="524.1,655.4 530.1,655.4 527.1,662.8" fill="#86a1c6"/>
<line x1="554.09" y1="647.64" x2="554.09" y2="661.84" stroke="#90a8c9" stroke-width="1"/>
<polygon points="551.09,659.44 557.09,659.44 554.09,666.84" fill="#86a1c6"/>
<line x1="581.08" y1="651.68" x2="581.08" y2="665.88" stroke="#90a8c9" stroke-width="1"/>
<polygon points="578.08,663.48 584.08,663.48 581.08,670.88" fill="#86a1c6"/>
<line x1="608.07" y1="655.72" x2="608.07" y2="669.92" stroke="#90a8c9" stroke-width="1"/>
<polygon points="605.07,667.52 611.07,667.52 608.07,674.92" fill="#86a1c6"/>
<line x1="635.06" y1="659.75" x2="635.06" y2="673.95" stroke="#90a8c9" stroke-width="1"/>
<polygon points="632.06,671.55 638.06,671.55 635.06,678.95" fill="#86a1c6"/>
<line x1="662.05" y1="663.79" x2="662.05" y2="677.99" stroke="#90a8c9" stroke-width="1"/>
<polygon points="659.05,675.59 665.05,675.59 662.05,682.99" fill="#86a1c6"/>
<line x1="689.04" y1="667.83" x2="689.04" y2="682.03" stroke="#90a8c9" stroke-width="1"/>
<polygon points="686.04,679.63 692.04,679.63 689.04,687.03" fill="#86a1c6"/>
<line x1="716.03" y1="671.87" x2="716.03" y2="686.07" stroke="#90a8c9" stroke-width="1"/>
<polygon points="713.03,683.67 719.03,683.67 716.03,691.07" fill="#86a1c6"/>
<line x1="743.02" y1="675.91" x2="743.02" y2="690.11" stroke="#90a8c9" stroke-width="1"/>
<polygon points="740.02,687.71 746.02,687.71 743.02,695.11" fill="#86a1c6"/>
<line x1="770.01" y1="679.95" x2="770.01" y2="694.15" stroke="#90a8c9" stroke-width="1"/>
<polygon points="767.01,691.75 773.01,691.75 770.01,699.15" fill="#86a1c6"/>
<line x1="797" y1="683.98" x2="797" y2="698.18" stroke="#90a8c9" stroke-width="1"/>
<polygon points="794,695.78 800,695.78 797,703.18" fill="#86a1c6"/>
<line x1="823.99" y1="688.02" x2="823.99" y2="702.22" stroke="#90a8c9" stroke-width="1"/>
<polygon points="820.99,699.82 826.99,699.82 823.99,707.22" fill="#86a1c6"/>
<line x1="850.98" y1="692.06" x2="850.98" y2="706.26" stroke="#90a8c9" stroke-width="1"/>
<polygon points="847.98,703.86 853.98,703.86 850.98,711.26" fill="#86a1c6"/>
<line x1="877.98" y1="696.1" x2="877.98" y2="710.3" stroke="#90a8c9" stroke-width="1"/>
<polygon points="874.98,707.9 880.98,707.9 877.98,715.3" fill="#86a1c6"/>
<line x1="904.97" y1="700.14" x2="904.97" y2="714.34" stroke="#90a8c9" stroke-width="1"/>
<polygon points="901.97,711.94 907.97,711.94 904.97,719.34" fill="#86a1c6"/>
<line x1="931.96" y1="704.18" x2="931.96" y2="718.38" stroke="#90a8c9" stroke-width="1"/>
<polygon points="928.96,715.98 934.96,715.98 931.96,723.38" fill="#86a1c6"/>
<line x1="958.95" y1="708.22" x2="958.95" y2="722.42" stroke="#90a8c9" stroke-width="1"/>
<polygon points="955.95,720.02 961.95,720.02 958.95,727.42" fill="#86a1c6"/>
<line x1="985.94" y1="712.25" x2="985.94" y2="726.45" stroke="#90a8c9" stroke-width="1"/>
<polygon points="982.94,724.05 988.94,724.05 985.94,731.45" fill="#86a1c6"/>
<line x1="1012.93" y1="716.29" x2="1012.93" y2="730.49" stroke="#90a8c9" stroke-width="1"/>
<polygon points="1009.93,728.09 1015.93,728.09 1012.93,735.49" fill="#86a1c6"/>
<line x1="1039.92" y1="720.33" x2="1039.92" y2="734.53" stroke="#90a8c9" stroke-width="1"/>
<polygon points="1036.92,732.13 1042.92,732.13 1039.92,739.53" fill="#86a1c6"/>
<line x1="1066.91" y1="724.37" x2="1066.91" y2="738.57" stroke="#90a8c9" stroke-width="1"/>
<polygon points="1063.91,736.17 1069.91,736.17 1066.91,743.57" fill="#86a1c6"/>
<line x1="1093.9" y1="728.41" x2="1093.9" y2="742.61" stroke="#90a8c9" stroke-width="1"/>
<polygon points="1090.9,740.21 1096.9,740.21 1093.9,747.61" fill="#86a1c6"/>
<line x1="1120.89" y1="732.45" x2="1120.89" y2="746.65" stroke="#90a8c9" stroke-width="1"/>
<polygon points="1117.89,744.25 1123.89,744.25 1120.89,751.65" fill="#86a1c6"/>
<line x1="1147.88" y1="736.48" x2="1147.88" y2="750.68" stroke="#90a8c9" stroke-width="1"/>
<polygon points="1144.88,748.28 1150.88,748.28 1147.88,755.68" fill="#86a1c6"/>
<line x1="1174.87" y1="740.52" x2="1174.87" y2="754.72" stroke="#90a8c9" stroke-width="1"/>
<polygon points="1171.87,752.32 1177.87,752.32 1174.87,759.72" fill="#86a1c6"/>
<line x1="1201.86" y1="744.56" x2="1201.86" y2="758.76" stroke="#90a8c9" stroke-width="1"/>
<polygon points="1198.86,756.36 1204.86,756.36 1201.86,763.76" fill="#86a1c6"/>
<line x1="1228.85" y1="748.6" x2="1228.85" y2="762.8" stroke="#90a8c9" stroke-width="1"/>
<polygon points="1225.85,760.4 1231.85,760.4 1228.85,767.8" fill="#86a1c6"/>
<circle cx="877.98" cy="696.1" r="1.6" fill="#86a1c6"/>
<polygon points="540.1,689.35 1215.85,790.45 1215.85,916.65 540.1,815.55" fill="none" stroke="#a3c4ee" stroke-width="1" stroke-dasharray="10 5"/>
<line x1="527.1" y1="750.5" x2="1228.85" y2="855.5" stroke="#a9a9a9" stroke-width="2"/>
<line x1="527.1" y1="672.8" x2="527.1" y2="828.2" stroke="#5a5a5a" stroke-width="1"/>
<line x1="1228.85" y1="777.8" x2="1228.85" y2="933.2" stroke="#000" stroke-width="1.15"/>
<line x1="527.1" y1="672.8" x2="1228.85" y2="777.8" stroke="#5c5c5c" stroke-width="1.05"/>
<line x1="527.1" y1="672.8" x2="1228.85" y2="777.8" stroke="#000" stroke-width="1.15" stroke-dasharray="3.4 3.4"/>
<line x1="527.1" y1="828.2" x2="1228.85" y2="933.2" stroke="#5c5c5c" stroke-width="1.05"/>
<line x1="527.1" y1="828.2" x2="1228.85" y2="933.2" stroke="#000" stroke-width="1.15" stroke-dasharray="3.4 3.4"/>
<polygon points="597.57,401.6 599.41,400.8 600.33,417.95 601.71,440.75 603.09,463.55 603.78,480.8 602.17,499.05 597.57,518.6 597.57,518.6" fill="#bfdfc0" fill-opacity=".75" stroke="#2e8b34" stroke-width="0.9" stroke-linejoin="round"/>
<line x1="597.57" y1="416.23" x2="600.18" y2="415.09" stroke="#2e8b34" stroke-width="0.8"/>
<line x1="597.57" y1="430.85" x2="601.02" y2="429.35" stroke="#2e8b34" stroke-width="0.8"/>
<line x1="597.57" y1="445.48" x2="601.89" y2="443.6" stroke="#2e8b34" stroke-width="0.8"/>
<line x1="597.57" y1="460.1" x2="602.75" y2="457.85" stroke="#2e8b34" stroke-width="0.8"/>
<line x1="597.57" y1="474.73" x2="603.44" y2="472.18" stroke="#2e8b34" stroke-width="0.8"/>
<line x1="597.57" y1="489.35" x2="603.25" y2="486.88" stroke="#2e8b34" stroke-width="0.8"/>
<line x1="597.57" y1="503.98" x2="601.41" y2="502.31" stroke="#2e8b34" stroke-width="0.8"/>
<polygon points="597.57,518.6 597.57,557 574.47,567.1" fill="#f9c4c4" fill-opacity=".8" stroke="none"/>
<line x1="597.57" y1="518.6" x2="597.57" y2="557" stroke="#f08a8a" stroke-width="0.9"/>
<line x1="597.57" y1="557" x2="574.47" y2="567.1" stroke="#ee3030" stroke-width="0.9"/>
<line x1="597.57" y1="518.6" x2="574.47" y2="567.1" stroke="#ff1010" stroke-width="1.3" stroke-dasharray="2.2 1.6"/>
<line x1="597.57" y1="531.4" x2="589.87" y2="534.77" stroke="#ee3030" stroke-width="0.8"/>
<line x1="597.57" y1="544.2" x2="582.17" y2="550.93" stroke="#ee3030" stroke-width="0.8"/>
<polygon points="575.47,567.4 584.47,567.4 581.47,560.1" fill="#111"/>
<rect x="591.57" y="540" width="8" height="14" fill="#fff" fill-opacity=".55"/>
<text x="597.07" y="552" font-size="11.5" fill="#000" text-anchor="middle">1</text>
<line x1="597.57" y1="401.6" x2="583.57" y2="407.8" stroke="#222" stroke-width="1" stroke-dasharray="2.5 2.5"/>
<polygon points="573.57,412.6 584.57,411.4 580.07,404.6" fill="#111"/>
<polygon points="807.86,433.35 822.46,427.55 816.91,458.3 812.24,488.7 809.32,513.65 807.86,528.5 807.86,528.5" fill="#bfdfc0" fill-opacity=".75" stroke="#2e8b34" stroke-width="0.9" stroke-linejoin="round"/>
<line x1="807.86" y1="446.94" x2="819.82" y2="442.19" stroke="#2e8b34" stroke-width="0.8"/>
<line x1="807.86" y1="460.54" x2="817.18" y2="456.83" stroke="#2e8b34" stroke-width="0.8"/>
<line x1="807.86" y1="474.13" x2="814.91" y2="471.33" stroke="#2e8b34" stroke-width="0.8"/>
<line x1="807.86" y1="487.72" x2="812.69" y2="485.8" stroke="#2e8b34" stroke-width="0.8"/>
<line x1="807.86" y1="501.31" x2="810.91" y2="500.1" stroke="#2e8b34" stroke-width="0.8"/>
<line x1="807.86" y1="514.91" x2="809.25" y2="514.35" stroke="#2e8b34" stroke-width="0.8"/>
<polygon points="807.86,528.5 807.86,588.75 784.06,598.75" fill="#f9c4c4" fill-opacity=".8" stroke="none"/>
<line x1="807.86" y1="528.5" x2="807.86" y2="588.75" stroke="#f08a8a" stroke-width="0.9"/>
<line x1="807.86" y1="588.75" x2="784.06" y2="598.75" stroke="#ee3030" stroke-width="0.9"/>
<line x1="807.86" y1="528.5" x2="784.06" y2="598.75" stroke="#ff1010" stroke-width="1.3" stroke-dasharray="2.2 1.6"/>
<line x1="807.86" y1="543.56" x2="801.91" y2="546.06" stroke="#ee3030" stroke-width="0.8"/>
<line x1="807.86" y1="558.62" x2="795.96" y2="563.62" stroke="#ee3030" stroke-width="0.8"/>
<line x1="807.86" y1="573.69" x2="790.01" y2="581.19" stroke="#ee3030" stroke-width="0.8"/>
<polygon points="785.06,599.05 794.06,599.05 791.06,591.75" fill="#111"/>
<rect x="801.86" y="571.75" width="8" height="14" fill="#fff" fill-opacity=".55"/>
<text x="807.36" y="583.75" font-size="11.5" fill="#000" text-anchor="middle">2</text>
<line x1="807.86" y1="433.35" x2="793.86" y2="439.55" stroke="#222" stroke-width="1" stroke-dasharray="2.5 2.5"/>
<polygon points="783.86,444.35 794.86,443.15 790.36,436.35" fill="#111"/>
<polygon points="1088.45,474.9 1110.05,465.2 1098.6,510.89 1088.45,556 1088.45,556" fill="#bfdfc0" fill-opacity=".75" stroke="#2e8b34" stroke-width="0.9" stroke-linejoin="round"/>
<line x1="1088.45" y1="486.49" x2="1106.78" y2="478.25" stroke="#2e8b34" stroke-width="0.8"/>
<line x1="1088.45" y1="498.07" x2="1103.51" y2="491.31" stroke="#2e8b34" stroke-width="0.8"/>
<line x1="1088.45" y1="509.66" x2="1100.24" y2="504.36" stroke="#2e8b34" stroke-width="0.8"/>
<line x1="1088.45" y1="521.24" x2="1097.15" y2="517.34" stroke="#2e8b34" stroke-width="0.8"/>
<line x1="1088.45" y1="532.83" x2="1094.25" y2="530.22" stroke="#2e8b34" stroke-width="0.8"/>
<line x1="1088.45" y1="544.41" x2="1091.35" y2="543.11" stroke="#2e8b34" stroke-width="0.8"/>
<polygon points="1088.45,556 1088.45,630.3 1064.15,641.3" fill="#f9c4c4" fill-opacity=".8" stroke="none"/>
<line x1="1088.45" y1="556" x2="1088.45" y2="630.3" stroke="#f08a8a" stroke-width="0.9"/>
<line x1="1088.45" y1="630.3" x2="1064.15" y2="641.3" stroke="#ee3030" stroke-width="0.9"/>
<line x1="1088.45" y1="556" x2="1064.15" y2="641.3" stroke="#ff1010" stroke-width="1.3" stroke-dasharray="2.2 1.6"/>
<line x1="1088.45" y1="570.86" x2="1083.59" y2="573.06" stroke="#ee3030" stroke-width="0.8"/>
<line x1="1088.45" y1="585.72" x2="1078.73" y2="590.12" stroke="#ee3030" stroke-width="0.8"/>
<line x1="1088.45" y1="600.58" x2="1073.87" y2="607.18" stroke="#ee3030" stroke-width="0.8"/>
<line x1="1088.45" y1="615.44" x2="1069.01" y2="624.24" stroke="#ee3030" stroke-width="0.8"/>
<polygon points="1065.15,641.6 1074.15,641.6 1071.15,634.3" fill="#111"/>
<rect x="1082.45" y="613.3" width="8" height="14" fill="#fff" fill-opacity=".55"/>
<text x="1087.95" y="625.3" font-size="11.5" fill="#000" text-anchor="middle">3</text>
<line x1="1088.45" y1="474.9" x2="1074.45" y2="481.1" stroke="#222" stroke-width="1" stroke-dasharray="2.5 2.5"/>
<polygon points="1064.45,485.9 1075.45,484.7 1070.95,477.9" fill="#111"/>
<polygon points="877.98,725.3 901.98,714.6 877.98,802.3 877.98,802.3" fill="#bfdfc0" fill-opacity=".75" stroke="#2e8b34" stroke-width="0.9" stroke-linejoin="round"/>
<line x1="877.98" y1="736.3" x2="898.55" y2="727.13" stroke="#2e8b34" stroke-width="0.8"/>
<line x1="877.98" y1="747.3" x2="895.12" y2="739.66" stroke="#2e8b34" stroke-width="0.8"/>
<line x1="877.98" y1="758.3" x2="891.69" y2="752.19" stroke="#2e8b34" stroke-width="0.8"/>
<line x1="877.98" y1="769.3" x2="888.26" y2="764.71" stroke="#2e8b34" stroke-width="0.8"/>
<line x1="877.98" y1="780.3" x2="884.83" y2="777.24" stroke="#2e8b34" stroke-width="0.8"/>
<line x1="877.98" y1="791.3" x2="881.4" y2="789.77" stroke="#2e8b34" stroke-width="0.8"/>
<polygon points="877.98,802.3 877.98,880.7 854.48,891" fill="#f9c4c4" fill-opacity=".8" stroke="none"/>
<line x1="877.98" y1="802.3" x2="877.98" y2="880.7" stroke="#f08a8a" stroke-width="0.9"/>
<line x1="877.98" y1="880.7" x2="854.48" y2="891" stroke="#ee3030" stroke-width="0.9"/>
<line x1="877.98" y1="802.3" x2="854.48" y2="891" stroke="#ff1010" stroke-width="1.3" stroke-dasharray="2.2 1.6"/>
<line x1="877.98" y1="815.37" x2="874.06" y2="817.08" stroke="#ee3030" stroke-width="0.8"/>
<line x1="877.98" y1="828.43" x2="870.14" y2="831.87" stroke="#ee3030" stroke-width="0.8"/>
<line x1="877.98" y1="841.5" x2="866.23" y2="846.65" stroke="#ee3030" stroke-width="0.8"/>
<line x1="877.98" y1="854.57" x2="862.31" y2="861.43" stroke="#ee3030" stroke-width="0.8"/>
<line x1="877.98" y1="867.63" x2="858.39" y2="876.22" stroke="#ee3030" stroke-width="0.8"/>
<polygon points="855.48,891.3 864.48,891.3 861.48,884" fill="#111"/>
<rect x="871.98" y="863.7" width="8" height="14" fill="#fff" fill-opacity=".55"/>
<text x="877.48" y="875.7" font-size="11.5" fill="#000" text-anchor="middle">4</text>
<line x1="877.98" y1="725.3" x2="863.98" y2="731.5" stroke="#222" stroke-width="1" stroke-dasharray="2.5 2.5"/>
<polygon points="853.98,736.3 864.98,735.1 860.48,728.3" fill="#111"/>
<line x1="527.4" y1="546.5" x2="502.1" y2="558.2" stroke="#62a4a4" stroke-width="1"/>
<line x1="527.4" y1="546.5" x2="502.1" y2="558.2" stroke="#157f80" stroke-width="1.1" stroke-dasharray="3 3"/>
<line x1="667.75" y1="567.5" x2="642.45" y2="579.2" stroke="#62a4a4" stroke-width="1"/>
<line x1="667.75" y1="567.5" x2="642.45" y2="579.2" stroke="#157f80" stroke-width="1.1" stroke-dasharray="3 3"/>
<line x1="506.7" y1="556" x2="647.05" y2="577" stroke="#6aa8a8" stroke-width="1"/>
<line x1="506.7" y1="556" x2="647.05" y2="577" stroke="#157f80" stroke-width="1.1" stroke-dasharray="3.4 3.6"/>
<polygon points="506.7,556 516.07,554.17 515.13,560.5" fill="#157f80"/>
<polygon points="647.05,577 637.68,578.83 638.62,572.5" fill="#157f80"/>
<text transform="translate(574 585) rotate(8.51) skewX(-7)" font-size="12.3" fill="#1e9c9e" text-anchor="middle">5.000</text>
<line x1="702.6" y1="573" x2="672.75" y2="586.79" stroke="#62a4a4" stroke-width="1"/>
<line x1="702.6" y1="573" x2="672.75" y2="586.79" stroke="#157f80" stroke-width="1.1" stroke-dasharray="3 3"/>
<line x1="913.12" y1="604.5" x2="883.27" y2="618.29" stroke="#62a4a4" stroke-width="1"/>
<line x1="913.12" y1="604.5" x2="883.27" y2="618.29" stroke="#157f80" stroke-width="1.1" stroke-dasharray="3 3"/>
<line x1="677.35" y1="584.59" x2="887.87" y2="616.09" stroke="#6aa8a8" stroke-width="1"/>
<line x1="677.35" y1="584.59" x2="887.87" y2="616.09" stroke="#157f80" stroke-width="1.1" stroke-dasharray="3.4 3.6"/>
<polygon points="677.35,584.59 686.72,582.76 685.77,589.09" fill="#157f80"/>
<polygon points="887.87,616.09 878.5,617.92 879.44,611.59" fill="#157f80"/>
<text transform="translate(781 618.5) rotate(8.51) skewX(-7)" font-size="12.3" fill="#1e9c9e" text-anchor="middle">7.500</text>
<line x1="948.1" y1="609.3" x2="918.25" y2="623.09" stroke="#62a4a4" stroke-width="1"/>
<line x1="948.1" y1="609.3" x2="918.25" y2="623.09" stroke="#157f80" stroke-width="1.1" stroke-dasharray="3 3"/>
<line x1="1228.8" y1="651.3" x2="1198.95" y2="665.09" stroke="#62a4a4" stroke-width="1"/>
<line x1="1228.8" y1="651.3" x2="1198.95" y2="665.09" stroke="#157f80" stroke-width="1.1" stroke-dasharray="3 3"/>
<line x1="922.85" y1="620.89" x2="1203.55" y2="662.89" stroke="#6aa8a8" stroke-width="1"/>
<line x1="922.85" y1="620.89" x2="1203.55" y2="662.89" stroke="#157f80" stroke-width="1.1" stroke-dasharray="3.4 3.6"/>
<polygon points="922.85,620.89 932.22,619.06 931.27,625.39" fill="#157f80"/>
<polygon points="1203.55,662.89 1194.17,664.72 1195.12,658.39" fill="#157f80"/>
<text transform="translate(1062 661) rotate(8.51) skewX(-7)" font-size="12.3" fill="#1e9c9e" text-anchor="middle">10.000</text>
<line x1="527.1" y1="828.2" x2="488.55" y2="845.98" stroke="#62a4a4" stroke-width="1"/>
<line x1="527.1" y1="828.2" x2="488.55" y2="845.98" stroke="#157f80" stroke-width="1.1" stroke-dasharray="3 3"/>
<line x1="1228.85" y1="933.2" x2="1190.3" y2="950.98" stroke="#62a4a4" stroke-width="1"/>
<line x1="1228.85" y1="933.2" x2="1190.3" y2="950.98" stroke="#157f80" stroke-width="1.1" stroke-dasharray="3 3"/>
<line x1="493.15" y1="843.78" x2="1194.9" y2="948.78" stroke="#6aa8a8" stroke-width="1"/>
<line x1="493.15" y1="843.78" x2="1194.9" y2="948.78" stroke="#157f80" stroke-width="1.1" stroke-dasharray="3.4 3.6"/>
<polygon points="493.15,843.78 502.53,841.95 501.58,848.28" fill="#157f80"/>
<polygon points="1194.9,948.78 1185.53,950.61 1186.47,944.28" fill="#157f80"/>
<text transform="translate(841 915) rotate(8.51) skewX(-7)" font-size="12.3" fill="#1e9c9e" text-anchor="middle">25.000</text>
<line x1="527.4" y1="391.1" x2="501.2" y2="403" stroke="#157f80" stroke-width="1"/>
<line x1="506.7" y1="400.6" x2="506.7" y2="556" stroke="#5d9a9c" stroke-width="1.2"/>
<polygon points="506.7,400.6 509.9,409.6 503.5,409.6" fill="#157f80"/>
<polygon points="506.7,556 503.5,547 509.9,547" fill="#157f80"/>
<polygon points="527.4,548 521.4,555.1 533.4,555.1" fill="#2fc23a" stroke="none"/>
<polygon points="527.4,548 521.4,555.1 526.4,556.1" fill="#4fdc58" stroke="none" opacity=".8"/>
<line x1="523.9" y1="556.5" x2="529.9" y2="556.5" stroke="#7fe488" stroke-width="0.9"/>
<polygon points="667.75,569 661.75,576.1 673.75,576.1" fill="#2fc23a" stroke="none"/>
<polygon points="667.75,569 661.75,576.1 666.75,577.1" fill="#4fdc58" stroke="none" opacity=".8"/>
<line x1="664.25" y1="577.5" x2="670.25" y2="577.5" stroke="#7fe488" stroke-width="0.9"/>
<rect x="526.8" y="384.7" width="8.4" height="9.2" fill="#1ed41e"/>
<rect x="667.15" y="405.7" width="8.4" height="9.2" fill="#1ed41e"/>
<circle cx="527.4" cy="546.5" r="2" fill="#ff1414"/>
<circle cx="667.75" cy="567.5" r="2" fill="#ff1414"/>
<circle cx="527.4" cy="391.1" r="2" fill="#ff1414"/>
<circle cx="667.75" cy="412.1" r="2" fill="#ff1414"/>
<circle cx="527.4" cy="468.8" r="2" fill="#ff1414"/>
<circle cx="667.75" cy="489.8" r="2" fill="#ff1414"/>
<polygon points="702.6,574.5 696.6,581.6 708.6,581.6" fill="#2fc23a" stroke="none"/>
<polygon points="702.6,574.5 696.6,581.6 701.6,582.6" fill="#4fdc58" stroke="none" opacity=".8"/>
<line x1="699.1" y1="583" x2="705.1" y2="583" stroke="#7fe488" stroke-width="0.9"/>
<polygon points="913.12,606 907.12,613.1 919.12,613.1" fill="#2fc23a" stroke="none"/>
<polygon points="913.12,606 907.12,613.1 912.12,614.1" fill="#4fdc58" stroke="none" opacity=".8"/>
<line x1="909.62" y1="614.5" x2="915.62" y2="614.5" stroke="#7fe488" stroke-width="0.9"/>
<rect x="702" y="411.2" width="8.4" height="9.2" fill="#1ed41e"/>
<rect x="912.52" y="442.7" width="8.4" height="9.2" fill="#1ed41e"/>
<circle cx="702.6" cy="573" r="2" fill="#ff1414"/>
<circle cx="913.12" cy="604.5" r="2" fill="#ff1414"/>
<circle cx="702.6" cy="417.6" r="2" fill="#ff1414"/>
<circle cx="913.12" cy="449.1" r="2" fill="#ff1414"/>
<circle cx="702.6" cy="495.3" r="2" fill="#ff1414"/>
<circle cx="913.12" cy="526.8" r="2" fill="#ff1414"/>
<polygon points="948.1,610.8 942.1,617.9 954.1,617.9" fill="#2fc23a" stroke="none"/>
<polygon points="948.1,610.8 942.1,617.9 947.1,618.9" fill="#4fdc58" stroke="none" opacity=".8"/>
<line x1="944.6" y1="619.3" x2="950.6" y2="619.3" stroke="#7fe488" stroke-width="0.9"/>
<polygon points="1228.8,652.8 1222.8,659.9 1234.8,659.9" fill="#2fc23a" stroke="none"/>
<polygon points="1228.8,652.8 1222.8,659.9 1227.8,660.9" fill="#4fdc58" stroke="none" opacity=".8"/>
<line x1="1225.3" y1="661.3" x2="1231.3" y2="661.3" stroke="#7fe488" stroke-width="0.9"/>
<rect x="947.5" y="447.5" width="8.4" height="9.2" fill="#1ed41e"/>
<rect x="1228.2" y="489.5" width="8.4" height="9.2" fill="#1ed41e"/>
<circle cx="948.1" cy="609.3" r="2" fill="#ff1414"/>
<circle cx="1228.8" cy="651.3" r="2" fill="#ff1414"/>
<circle cx="948.1" cy="453.9" r="2" fill="#ff1414"/>
<circle cx="1228.8" cy="495.9" r="2" fill="#ff1414"/>
<circle cx="948.1" cy="531.6" r="2" fill="#ff1414"/>
<circle cx="1228.8" cy="573.6" r="2" fill="#ff1414"/>
<polygon points="527.1,829.7 521.1,836.8 533.1,836.8" fill="#2fc23a" stroke="none"/>
<polygon points="527.1,829.7 521.1,836.8 526.1,837.8" fill="#4fdc58" stroke="none" opacity=".8"/>
<line x1="523.6" y1="838.2" x2="529.6" y2="838.2" stroke="#7fe488" stroke-width="0.9"/>
<polygon points="1228.85,934.7 1222.85,941.8 1234.85,941.8" fill="#2fc23a" stroke="none"/>
<polygon points="1228.85,934.7 1222.85,941.8 1227.85,942.8" fill="#4fdc58" stroke="none" opacity=".8"/>
<line x1="1225.35" y1="943.2" x2="1231.35" y2="943.2" stroke="#7fe488" stroke-width="0.9"/>
<rect x="526.5" y="666.4" width="8.4" height="9.2" fill="#1ed41e"/>
<rect x="1228.25" y="771.4" width="8.4" height="9.2" fill="#1ed41e"/>
<circle cx="527.1" cy="828.2" r="2" fill="#ff1414"/>
<circle cx="1228.85" cy="933.2" r="2" fill="#ff1414"/>
<circle cx="527.1" cy="672.8" r="2" fill="#ff1414"/>
<circle cx="1228.85" cy="777.8" r="2" fill="#ff1414"/>
<circle cx="527.1" cy="750.5" r="2" fill="#ff1414"/>
<circle cx="1228.85" cy="855.5" r="2" fill="#ff1414"/>
<rect x="511" y="460" width="18.3" height="36" fill="#fff"/>
<text transform="translate(524 478) rotate(-90)" font-size="12.4" fill="#1e9c9e" text-anchor="middle">5.000</text>
<rect x="544" y="438.5" width="50" height="31.7" fill="#000" opacity=".45" filter="url(#sh)"/>
<rect x="541.5" y="435.5" width="47" height="28.7" fill="#e6ddee" stroke="#9310f2" stroke-width="3"/>
<text x="565" y="454.05" font-size="13.9" font-weight="bold" fill="#8a12e6" text-anchor="middle">h/l=1</text>
<rect x="717.3" y="457.8" width="79.6" height="31.7" fill="#000" opacity=".45" filter="url(#sh)"/>
<rect x="714.8" y="454.8" width="76.6" height="28.7" fill="#e6ddee" stroke="#9310f2" stroke-width="3"/>
<text x="753.1" y="473.35" font-size="13.9" font-weight="bold" fill="#8a12e6" text-anchor="middle">h/l=0.667</text>
<rect x="1014.3" y="508.9" width="62.4" height="30.8" fill="#000" opacity=".45" filter="url(#sh)"/>
<rect x="1011.8" y="505.9" width="59.4" height="27.8" fill="#e6ddee" stroke="#9310f2" stroke-width="3"/>
<text x="1041.5" y="524" font-size="13.9" font-weight="bold" fill="#8a12e6" text-anchor="middle">h/l=0.5</text>
<rect x="802.2" y="816.6" width="63.1" height="31.8" fill="#000" opacity=".45" filter="url(#sh)"/>
<rect x="799.7" y="813.6" width="60.1" height="28.8" fill="#e6ddee" stroke="#9310f2" stroke-width="3"/>
<text x="829.75" y="832.2" font-size="13.9" font-weight="bold" fill="#8a12e6" text-anchor="middle">h/l=0.2</text>
<line x1="527.4" y1="546.5" x2="527.4" y2="576.5" stroke="#1010e0" stroke-width="2.3"/>
<polygon points="523.8,572.5 531,572.5 527.4,584.5" fill="#0a0ac8"/>
<text x="527.4" y="600.5" font-size="13" fill="#1414ff" text-anchor="middle">Z</text>
<line x1="527.4" y1="546.5" x2="552.4" y2="550.3" stroke="#c80f0f" stroke-width="2.6"/>
<polygon points="549.4,545.9 549.4,553.9 561.4,551.7" fill="#e01010"/>
<text x="570.4" y="558.5" font-size="13" fill="#ff1414" text-anchor="middle">X</text>
<line x1="527.4" y1="546.5" x2="515.4" y2="552.1" stroke="#14d214" stroke-width="2.8"/>
<polygon points="518.4,548 514.9,556 507.4,555.3" fill="#14e014"/>
<text x="501.9" y="562" font-size="13" fill="#28e628" text-anchor="middle">Y</text>
<circle cx="527.4" cy="546" r="3.6" fill="#ffe600"/>
<line x1="384.5" y1="960.5" x2="384.5" y2="990.5" stroke="#1010e0" stroke-width="2.8"/>
<polygon points="380.9,986.5 388.1,986.5 384.5,999" fill="#0a0ac8"/>
<text x="384.5" y="1014" font-size="13" fill="#1414ff" text-anchor="middle">Z</text>
<line x1="384.5" y1="960.5" x2="411.5" y2="964.7" stroke="#c80f0f" stroke-width="2.8"/>
<polygon points="407.5,959.7 407.5,968.3 420,965.8" fill="#e01010"/>
<text x="428" y="972" font-size="13" fill="#ff1414" text-anchor="middle">X</text>
<line x1="384.5" y1="960.5" x2="371.5" y2="966.7" stroke="#14d214" stroke-width="3"/>
<polygon points="374.5,962.5 370.5,971 364,968.7" fill="#14e014"/>
<text x="359.5" y="976.5" font-size="13" fill="#28e628" text-anchor="middle">Y</text>
<circle cx="384.5" cy="960" r="3.8" fill="#ffe600"/>
<polygon points="1257.3,179.7 1330.7,190.3 1330.7,271 1257.3,261" fill="#e4e4e4" stroke="#222" stroke-width="0.9" stroke-linejoin="round"/>
<polygon points="1330.7,190.3 1372.7,171.7 1372.7,253 1330.7,271" fill="#cbcbcb" stroke="#222" stroke-width="0.9" stroke-linejoin="round"/>
<polygon points="1257.3,179.7 1298.7,160.3 1372.7,171.7 1330.7,190.3" fill="#b7b7b7" stroke="#222" stroke-width="0.9" stroke-linejoin="round"/>
<line x1="1275.28" y1="182.3" x2="1275.28" y2="263.45" stroke="#0c0c0c" stroke-width="1.9"/>
<line x1="1257.3" y1="199.62" x2="1330.7" y2="210.07" stroke="#0c0c0c" stroke-width="1.9"/>
<line x1="1311.98" y1="187.6" x2="1311.98" y2="268.45" stroke="#0c0c0c" stroke-width="1.9"/>
<line x1="1257.3" y1="240.27" x2="1330.7" y2="250.42" stroke="#0c0c0c" stroke-width="1.9"/>
<line x1="1341.62" y1="185.46" x2="1341.62" y2="266.32" stroke="#0c0c0c" stroke-width="1.9"/>
<line x1="1330.7" y1="210.07" x2="1372.7" y2="192.43" stroke="#0c0c0c" stroke-width="1.9"/>
<line x1="1362.41" y1="176.26" x2="1362.41" y2="257.41" stroke="#0c0c0c" stroke-width="1.9"/>
<line x1="1330.7" y1="250.42" x2="1372.7" y2="233.49" stroke="#0c0c0c" stroke-width="1.9"/>
<line x1="1275.65" y1="182.35" x2="1317.2" y2="163.15" stroke="#0c0c0c" stroke-width="1.9"/>
<line x1="1267.65" y1="174.85" x2="1341.2" y2="185.65" stroke="#0c0c0c" stroke-width="1.9"/>
<line x1="1312.35" y1="187.65" x2="1354.2" y2="168.85" stroke="#0c0c0c" stroke-width="1.9"/>
<line x1="1288.35" y1="165.15" x2="1362.2" y2="176.35" stroke="#0c0c0c" stroke-width="1.9"/>
<text x="1294" y="233.5" font-size="17.5" font-weight="bold" fill="#68ee68" text-anchor="middle">-Y</text>
<text transform="translate(1351.5 229.5) skewY(-22) scale(.6 1)" font-size="17" font-weight="bold" fill="#f08484" text-anchor="middle">-X</text>
<ellipse cx="1316" cy="176.5" rx="10" ry="2" fill="#9c9ce4" opacity=".7" transform="rotate(-4 1316 176)"/>
</svg>
<div class="a" style="left:1px;top:132px;width:318px;height:26px;background:#d9e6f4;"></div>
<div class="t" style="left:8.60px;top:135.11px;font-size:15.4px;line-height:22px;letter-spacing:-0.438px;color:#2b2b2b;font-weight:bold;">Navigator - Ergebnisse</div>
<svg class="a" style="left:270px;top:134px" width="48" height="22"><rect x="5.5" y="9.5" width="7" height="6" fill="none" stroke="#333" stroke-width="1.4"/><path d="M8 9V6.5H15V12.5H13" fill="none" stroke="#333" stroke-width="1.4"/><path d="M31 6.5L39 14.5M39 6.5L31 14.5" stroke="#333" stroke-width="1.9" fill="none"/></svg>
<div class="a" style="left:1px;top:158px;width:318px;height:864px;background:#f7f7f7;"></div>
<div class="a" style="left:2px;top:158px;width:2px;height:864px;background:#c6c6d8;"></div>
<div class="a" style="left:317px;top:158px;width:2px;height:864px;background:#c6c6d6;"></div>
<div class="a" style="left:2px;top:158px;width:317px;height:1px;background:#c9c9d6;"></div>
<div class="a" style="left:6px;top:164px;width:269px;height:24px;background:#e5e5e5;"></div>
<div class="a" style="left:276px;top:164px;width:19px;height:24px;background:#d0d0d0;"></div>
<div class="a" style="left:296px;top:164px;width:19px;height:24px;background:#d0d0d0;"></div>
<svg class="a" style="left:255px;top:164px" width="60" height="24"><path d="M6 10L10.5 14.5L15 10" stroke="#aaa" stroke-width="1.1" fill="none"/><path d="M33 8L27.5 12L33 16Z" fill="#444"/><path d="M48 8L53.5 12L48 16Z" fill="#444"/></svg>
<svg class="a" style="left:11px;top:167px;overflow:visible" width="20" height="20"><rect x="0" y="0" width="18" height="18" fill="#bdbdbd"/><rect x="2" y="3" width="14" height="7" fill="#e2e2e2"/><path d="M2 6.5H16M6.5 3V10M11.5 3V10" stroke="#bdbdbd" stroke-width="1"/><path d="M2 15.5Q9 14 16 11.5V16H2Z" fill="#e8e8e8"/></svg>
<div class="t" style="left:35.20px;top:167.04px;font-size:13.5px;line-height:19px;letter-spacing:-0.486px;color:#8c8c8c;">Statische Analyse</div>
<div class="a" style="left:4px;top:200px;width:313px;height:524px;background:#fff;"></div>
<div class="a" style="left:49px;top:477px;width:268px;height:23px;background:#cce8ff;"></div>
<svg class="a" style="left:8px;top:207.0px" width="14" height="14"><path d="M1.7 4L7.2 9.5L12.7 4" stroke="#222" stroke-width="1.7" fill="none"/></svg>
<div class="a" style="left:30.3px;top:203.4px;width:14px;height:14px;border:1px solid #333;background:#fff"></div>
<svg class="a" style="left:52px;top:202.5px;overflow:visible" width="20" height="20"><path d="M4.2 3.7Q-2.4 9.3 4.2 14.9" fill="none" stroke="#555" stroke-width=".8"/><path d="M15.4 3.7Q22 9.3 15.4 14.9" fill="none" stroke="#555" stroke-width=".8"/><path d="M4.2 4Q9.8 9.6 15.4 4" fill="none" stroke="#555" stroke-width=".8"/><path d="M4.2 14.9V3.7H15.4V14.9" fill="none" stroke="#111" stroke-width="1.35"/><circle cx="4.2" cy="3.7" r="1.45" fill="#e01212"/><circle cx="15.4" cy="3.7" r="1.45" fill="#e01212"/><circle cx="4.2" cy="14.9" r="1.45" fill="#e01212"/><circle cx="15.4" cy="14.9" r="1.45" fill="#e01212"/></svg>
<div class="t" style="left:78.30px;top:204.04px;font-size:13.5px;line-height:19px;letter-spacing:-0.185px;color:#000;">Globale Verformungen</div>
<svg class="a" style="left:54.3px;top:225.3px" width="18" height="18"><circle cx="9" cy="9" r="7.6" fill="#fff" stroke="#333" stroke-width="1.1"/><circle cx="9" cy="9" r="4.4" fill="#333"/></svg>
<svg class="a" style="left:77px;top:225.6px;overflow:visible" width="20" height="20"><path d="M4.2 3.7Q-2.4 9.3 4.2 14.9" fill="none" stroke="#555" stroke-width=".8"/><path d="M15.4 3.7Q22 9.3 15.4 14.9" fill="none" stroke="#555" stroke-width=".8"/><path d="M4.2 4Q9.8 9.6 15.4 4" fill="none" stroke="#555" stroke-width=".8"/><path d="M4.2 14.9V3.7H15.4V14.9" fill="none" stroke="#111" stroke-width="1.35"/><circle cx="4.2" cy="3.7" r="1.45" fill="#e01212"/><circle cx="15.4" cy="3.7" r="1.45" fill="#e01212"/><circle cx="4.2" cy="14.9" r="1.45" fill="#e01212"/><circle cx="15.4" cy="14.9" r="1.45" fill="#e01212"/></svg>
<div class="t" style="left:103.00px;top:227.04px;font-size:13.5px;line-height:19px;letter-spacing:-0.407px;color:#000;">|u|</div>
<svg class="a" style="left:54.3px;top:248.3px" width="18" height="18"><circle cx="9" cy="9" r="7.6" fill="#fff" stroke="#333" stroke-width="1.1"/></svg>
<svg class="a" style="left:77px;top:248.6px;overflow:visible" width="20" height="20"><path d="M4.2 3.7Q-2.4 9.3 4.2 14.9" fill="none" stroke="#555" stroke-width=".8"/><path d="M15.4 3.7Q22 9.3 15.4 14.9" fill="none" stroke="#555" stroke-width=".8"/><path d="M4.2 4Q9.8 9.6 15.4 4" fill="none" stroke="#555" stroke-width=".8"/><path d="M4.2 14.9V3.7H15.4V14.9" fill="none" stroke="#111" stroke-width="1.35"/><circle cx="4.2" cy="3.7" r="1.45" fill="#e01212"/><circle cx="15.4" cy="3.7" r="1.45" fill="#e01212"/><circle cx="4.2" cy="14.9" r="1.45" fill="#e01212"/><circle cx="15.4" cy="14.9" r="1.45" fill="#e01212"/></svg>
<div class="t" style="left:103px;top:250.04px;font-size:13.5px;line-height:19px"><span style="letter-spacing:-.7px">u</span><span style="font-size:12.4px;position:relative;top:1px;display:inline-block;transform:scaleX(.9);transform-origin:0 0">X</span></div>
<svg class="a" style="left:54.3px;top:271.3px" width="18" height="18"><circle cx="9" cy="9" r="7.6" fill="#fff" stroke="#333" stroke-width="1.1"/></svg>
<svg class="a" style="left:77px;top:271.6px;overflow:visible" width="20" height="20"><path d="M4.2 3.7Q-2.4 9.3 4.2 14.9" fill="none" stroke="#555" stroke-width=".8"/><path d="M15.4 3.7Q22 9.3 15.4 14.9" fill="none" stroke="#555" stroke-width=".8"/><path d="M4.2 4Q9.8 9.6 15.4 4" fill="none" stroke="#555" stroke-width=".8"/><path d="M4.2 14.9V3.7H15.4V14.9" fill="none" stroke="#111" stroke-width="1.35"/><circle cx="4.2" cy="3.7" r="1.45" fill="#e01212"/><circle cx="15.4" cy="3.7" r="1.45" fill="#e01212"/><circle cx="4.2" cy="14.9" r="1.45" fill="#e01212"/><circle cx="15.4" cy="14.9" r="1.45" fill="#e01212"/></svg>
<div class="t" style="left:103px;top:273.04px;font-size:13.5px;line-height:19px"><span style="letter-spacing:-.7px">u</span><span style="font-size:12.4px;position:relative;top:1px;display:inline-block;transform:scaleX(.9);transform-origin:0 0">Y</span></div>
<svg class="a" style="left:54.3px;top:294.3px" width="18" height="18"><circle cx="9" cy="9" r="7.6" fill="#fff" stroke="#333" stroke-width="1.1"/></svg>
<svg class="a" style="left:77px;top:294.6px;overflow:visible" width="20" height="20"><path d="M4.2 3.7Q-2.4 9.3 4.2 14.9" fill="none" stroke="#555" stroke-width=".8"/><path d="M15.4 3.7Q22 9.3 15.4 14.9" fill="none" stroke="#555" stroke-width=".8"/><path d="M4.2 4Q9.8 9.6 15.4 4" fill="none" stroke="#555" stroke-width=".8"/><path d="M4.2 14.9V3.7H15.4V14.9" fill="none" stroke="#111" stroke-width="1.35"/><circle cx="4.2" cy="3.7" r="1.45" fill="#e01212"/><circle cx="15.4" cy="3.7" r="1.45" fill="#e01212"/><circle cx="4.2" cy="14.9" r="1.45" fill="#e01212"/><circle cx="15.4" cy="14.9" r="1.45" fill="#e01212"/></svg>
<div class="t" style="left:103px;top:296.04px;font-size:13.5px;line-height:19px"><span style="letter-spacing:-.7px">u</span><span style="font-size:12.4px;position:relative;top:1px;display:inline-block;transform:scaleX(.9);transform-origin:0 0">Z</span></div>
<svg class="a" style="left:54.3px;top:317.3px" width="18" height="18"><circle cx="9" cy="9" r="7.6" fill="#fff" stroke="#333" stroke-width="1.1"/></svg>
<svg class="a" style="left:77px;top:317.6px;overflow:visible" width="20" height="20"><path d="M4.2 3.7Q-2.4 9.3 4.2 14.9" fill="none" stroke="#555" stroke-width=".8"/><path d="M15.4 3.7Q22 9.3 15.4 14.9" fill="none" stroke="#555" stroke-width=".8"/><path d="M4.2 4Q9.8 9.6 15.4 4" fill="none" stroke="#555" stroke-width=".8"/><path d="M4.2 14.9V3.7H15.4V14.9" fill="none" stroke="#111" stroke-width="1.35"/><circle cx="4.2" cy="3.7" r="1.45" fill="#e01212"/><circle cx="15.4" cy="3.7" r="1.45" fill="#e01212"/><circle cx="4.2" cy="14.9" r="1.45" fill="#e01212"/><circle cx="15.4" cy="14.9" r="1.45" fill="#e01212"/></svg>
<div class="t" style="left:103px;top:319.04px;font-size:13.5px;line-height:19px"><span style="letter-spacing:-.7px">φ</span><span style="font-size:12.4px;position:relative;top:1px;display:inline-block;transform:scaleX(.9);transform-origin:0 0">X</span></div>
<svg class="a" style="left:54.3px;top:340.3px" width="18" height="18"><circle cx="9" cy="9" r="7.6" fill="#fff" stroke="#333" stroke-width="1.1"/></svg>
<svg class="a" style="left:77px;top:340.6px;overflow:visible" width="20" height="20"><path d="M4.2 3.7Q-2.4 9.3 4.2 14.9" fill="none" stroke="#555" stroke-width=".8"/><path d="M15.4 3.7Q22 9.3 15.4 14.9" fill="none" stroke="#555" stroke-width=".8"/><path d="M4.2 4Q9.8 9.6 15.4 4" fill="none" stroke="#555" stroke-width=".8"/><path d="M4.2 14.9V3.7H15.4V14.9" fill="none" stroke="#111" stroke-width="1.35"/><circle cx="4.2" cy="3.7" r="1.45" fill="#e01212"/><circle cx="15.4" cy="3.7" r="1.45" fill="#e01212"/><circle cx="4.2" cy="14.9" r="1.45" fill="#e01212"/><circle cx="15.4" cy="14.9" r="1.45" fill="#e01212"/></svg>
<div class="t" style="left:103px;top:342.04px;font-size:13.5px;line-height:19px"><span style="letter-spacing:-.7px">φ</span><span style="font-size:12.4px;position:relative;top:1px;display:inline-block;transform:scaleX(.9);transform-origin:0 0">Y</span></div>
<svg class="a" style="left:54.3px;top:363.3px" width="18" height="18"><circle cx="9" cy="9" r="7.6" fill="#fff" stroke="#333" stroke-width="1.1"/></svg>
<svg class="a" style="left:77px;top:363.6px;overflow:visible" width="20" height="20"><path d="M4.2 3.7Q-2.4 9.3 4.2 14.9" fill="none" stroke="#555" stroke-width=".8"/><path d="M15.4 3.7Q22 9.3 15.4 14.9" fill="none" stroke="#555" stroke-width=".8"/><path d="M4.2 4Q9.8 9.6 15.4 4" fill="none" stroke="#555" stroke-width=".8"/><path d="M4.2 14.9V3.7H15.4V14.9" fill="none" stroke="#111" stroke-width="1.35"/><circle cx="4.2" cy="3.7" r="1.45" fill="#e01212"/><circle cx="15.4" cy="3.7" r="1.45" fill="#e01212"/><circle cx="4.2" cy="14.9" r="1.45" fill="#e01212"/><circle cx="15.4" cy="14.9" r="1.45" fill="#e01212"/></svg>
<div class="t" style="left:103px;top:365.04px;font-size:13.5px;line-height:19px"><span style="letter-spacing:-.7px">φ</span><span style="font-size:12.4px;position:relative;top:1px;display:inline-block;transform:scaleX(.9);transform-origin:0 0">Z</span></div>
<svg class="a" style="left:8px;top:390.0px" width="14" height="14"><path d="M5.5 1.7L11 7L5.5 12.3" stroke="#9c9c9c" stroke-width="1.5" fill="none"/></svg>
<div class="a" style="left:30.3px;top:387.4px;width:14px;height:14px;border:1px solid #333;background:#fff"></div>
<svg class="a" style="left:52px;top:386.5px;overflow:visible" width="20" height="20"><path d="M4.2 11Q10 25.5 15.8 11Z" fill="#c4c4f6" stroke="#2222f4" stroke-width="1.2"/><path d="M.6 10.6L2 2.6L4.4 10.6Z" fill="#ff6060" stroke="#f01010" stroke-width="1" stroke-linejoin="round"/><path d="M19.4 10.6L18 2.6L15.6 10.6Z" fill="#ff6060" stroke="#f01010" stroke-width="1" stroke-linejoin="round"/><rect x=".2" y="9.6" width="19.6" height="2" fill="#a9c1dc"/><circle cx=".9" cy="10.6" r="1.1" fill="#f02020"/><circle cx="19.1" cy="10.6" r="1.1" fill="#f02020"/></svg>
<div class="t" style="left:78.30px;top:388.04px;font-size:13.5px;line-height:19px;letter-spacing:-0.636px;color:#000;">Stäbe</div>
<svg class="a" style="left:8px;top:413.0px" width="14" height="14"><path d="M5.5 1.7L11 7L5.5 12.3" stroke="#9c9c9c" stroke-width="1.5" fill="none"/></svg>
<div class="a" style="left:30.3px;top:410.4px;width:14px;height:14px;border:1px solid #333;background:#fff"></div>
<svg class="a" style="left:52px;top:409.5px;overflow:visible" width="20" height="20"><defs><radialGradient id="rbw13" gradientUnits="userSpaceOnUse" cx="15.4" cy="17.2" r="15.5"><stop offset="0" stop-color="#d80000"/><stop offset=".14" stop-color="#f02000"/><stop offset=".26" stop-color="#ff9800"/><stop offset=".38" stop-color="#f8f000"/><stop offset=".52" stop-color="#40e020"/><stop offset=".66" stop-color="#10d8c0"/><stop offset=".8" stop-color="#10a0f0"/><stop offset=".95" stop-color="#1030d0"/></radialGradient></defs><path d="M.9 10L8.7 4.7Q14 5 19.3 6.7L15.2 16.3Q9 12 .9 10Z" fill="url(#rbw13)"/></svg>
<div class="t" style="left:78.30px;top:411.04px;font-size:13.5px;line-height:19px;letter-spacing:-0.833px;color:#000;">Flächen</div>
<svg class="a" style="left:8px;top:436.0px" width="14" height="14"><path d="M5.5 1.7L11 7L5.5 12.3" stroke="#9c9c9c" stroke-width="1.5" fill="none"/></svg>
<div class="a" style="left:30.3px;top:433.4px;width:14px;height:14px;border:1px solid #333;background:#fff"></div>
<svg class="a" style="left:52px;top:432.5px;overflow:visible" width="20" height="20"><path d="M7.1 3.5L2 8.8L8.7 10.5L12.5 8.1Z" fill="#3cbc5c"/><path d="M7.1 3.5L8.7 10.5L12.5 8.1Z" fill="#6ad884"/><path d="M7.1 3.5L2 8.8L8.7 10.5Z" fill="#2a9a48"/><circle cx="7.1" cy="2.9" r="2.6" fill="#14682a"/><circle cx="6.4" cy="2.1" r=".9" fill="#58b070"/><path d="M20 1.9H15.5V-.1L12.1 3.1L15.5 6.4V4.5H20Z" fill="#40e074" stroke="#1a7a34" stroke-width=".7" stroke-linejoin="round"/><path d="M5.6 19.3V15.5H3.7L7 11.7L10.3 15.5H8.4V19.3Z" fill="#40e074" stroke="#1a7a34" stroke-width=".7" stroke-linejoin="round"/></svg>
<div class="t" style="left:78.30px;top:434.04px;font-size:13.5px;line-height:19px;letter-spacing:-0.285px;color:#000;">Lagerreaktionen</div>
<svg class="a" style="left:8px;top:459.0px" width="14" height="14"><path d="M5.5 1.7L11 7L5.5 12.3" stroke="#9c9c9c" stroke-width="1.5" fill="none"/></svg>
<div class="a" style="left:30.3px;top:456.4px;width:14px;height:14px;border:1px solid #333;background:#fff"></div>
<svg class="a" style="left:52px;top:455.5px;overflow:visible" width="20" height="20"><path d="M4.2 3.7Q-2.4 9.3 4.2 14.9" fill="none" stroke="#555" stroke-width=".8"/><path d="M15.4 3.7Q22 9.3 15.4 14.9" fill="none" stroke="#555" stroke-width=".8"/><path d="M4.2 4Q9.8 9.6 15.4 4" fill="none" stroke="#555" stroke-width=".8"/><path d="M4.2 14.9V3.7H15.4V14.9" fill="none" stroke="#111" stroke-width="1.35"/><circle cx="4.2" cy="3.7" r="1.45" fill="#e01212"/><circle cx="15.4" cy="3.7" r="1.45" fill="#e01212"/><circle cx="4.2" cy="14.9" r="1.45" fill="#e01212"/><circle cx="15.4" cy="14.9" r="1.45" fill="#e01212"/></svg>
<div class="t" style="left:78.30px;top:457.04px;font-size:13.5px;line-height:19px;letter-spacing:-0.332px;color:#000;">Lastverteilung</div>
<svg class="a" style="left:8px;top:483.0px" width="14" height="14"><path d="M1.7 4L7.2 9.5L12.7 4" stroke="#222" stroke-width="1.7" fill="none"/></svg>
<div class="a" style="left:30.3px;top:479.4px;width:14px;height:14px;border:1px solid #333;background:#fff"></div><svg class="a" style="left:30.3px;top:479.4px" width="16" height="16"><path d="M3.2 8.2L6.6 11.6L13 4.2" stroke="#222" stroke-width="1.4" fill="none"/></svg>
<svg class="a" style="left:52px;top:478.5px;overflow:visible" width="20" height="20"><defs><linearGradient id="bl16" x1="0" y1="0" x2=".4" y2="1"><stop offset="0" stop-color="#3e62ee"/><stop offset="1" stop-color="#6f8cf6"/></linearGradient></defs><path d="M.8 14L6.6 11.1" stroke="#4a7898" stroke-width="1.6"/><path d="M6 10.2L19.4 3.4Q16 10.6 8.6 14.6Z" fill="url(#bl16)"/></svg>
<div class="t" style="left:78.30px;top:480.04px;font-size:13.5px;line-height:19px;letter-spacing:-0.344px;color:#000;">Ergebnisschnitte</div>
<svg class="a" style="left:54.3px;top:501.3px" width="18" height="18"><circle cx="9" cy="9" r="7.6" fill="#fff" stroke="#333" stroke-width="1.1"/></svg>
<svg class="a" style="left:77px;top:501.6px;overflow:visible" width="20" height="20"><path d="M4.2 3.7Q-2.4 9.3 4.2 14.9" fill="none" stroke="#555" stroke-width=".8"/><path d="M15.4 3.7Q22 9.3 15.4 14.9" fill="none" stroke="#555" stroke-width=".8"/><path d="M4.2 4Q9.8 9.6 15.4 4" fill="none" stroke="#555" stroke-width=".8"/><path d="M4.2 14.9V3.7H15.4V14.9" fill="none" stroke="#111" stroke-width="1.35"/><circle cx="4.2" cy="3.7" r="1.45" fill="#e01212"/><circle cx="15.4" cy="3.7" r="1.45" fill="#e01212"/><circle cx="4.2" cy="14.9" r="1.45" fill="#e01212"/><circle cx="15.4" cy="14.9" r="1.45" fill="#e01212"/></svg>
<div class="t" style="left:103.00px;top:503.04px;font-size:13.5px;line-height:19px;letter-spacing:-0.165px;color:#000;">Globale Verformungen</div>
<svg class="a" style="left:54.3px;top:524.3px" width="18" height="18"><circle cx="9" cy="9" r="7.6" fill="#fff" stroke="#333" stroke-width="1.1"/><circle cx="9" cy="9" r="4.4" fill="#333"/></svg>
<svg class="a" style="left:77px;top:524.6px;overflow:visible" width="20" height="20"><defs><radialGradient id="rbw18" gradientUnits="userSpaceOnUse" cx="15.4" cy="17.2" r="15.5"><stop offset="0" stop-color="#d80000"/><stop offset=".14" stop-color="#f02000"/><stop offset=".26" stop-color="#ff9800"/><stop offset=".38" stop-color="#f8f000"/><stop offset=".52" stop-color="#40e020"/><stop offset=".66" stop-color="#10d8c0"/><stop offset=".8" stop-color="#10a0f0"/><stop offset=".95" stop-color="#1030d0"/></radialGradient></defs><path d="M.9 10L8.7 4.7Q14 5 19.3 6.7L15.2 16.3Q9 12 .9 10Z" fill="url(#rbw18)"/></svg>
<div class="t" style="left:103.00px;top:526.04px;font-size:13.5px;line-height:19px;letter-spacing:-0.761px;color:#000;">Flächen</div>
<svg class="a" style="left:54.3px;top:547.3px" width="18" height="18"><circle cx="9" cy="9" r="7.6" fill="#fff" stroke="#333" stroke-width="1.1"/></svg>
<svg class="a" style="left:77px;top:547.6px;overflow:visible" width="20" height="20"><path d="M4.2 3.7Q-2.4 9.3 4.2 14.9" fill="none" stroke="#555" stroke-width=".8"/><path d="M15.4 3.7Q22 9.3 15.4 14.9" fill="none" stroke="#555" stroke-width=".8"/><path d="M4.2 4Q9.8 9.6 15.4 4" fill="none" stroke="#555" stroke-width=".8"/><path d="M4.2 14.9V3.7H15.4V14.9" fill="none" stroke="#111" stroke-width="1.35"/><circle cx="4.2" cy="3.7" r="1.45" fill="#e01212"/><circle cx="15.4" cy="3.7" r="1.45" fill="#e01212"/><circle cx="4.2" cy="14.9" r="1.45" fill="#e01212"/><circle cx="15.4" cy="14.9" r="1.45" fill="#e01212"/></svg>
<div class="t" style="left:103.00px;top:549.04px;font-size:13.5px;line-height:19px;letter-spacing:-0.290px;color:#000;">Lastverteilung</div>
<svg class="a" style="left:34px;top:574.0px" width="14" height="14"><path d="M5.5 1.7L11 7L5.5 12.3" stroke="#9c9c9c" stroke-width="1.5" fill="none"/></svg>
<div class="a" style="left:55.3px;top:571.4px;width:14px;height:14px;border:1px solid #333;background:#fff"></div>
<svg class="a" style="left:77px;top:570.6px;overflow:visible;opacity:.78" width="20" height="20"><defs><linearGradient id="bl20" x1="0" y1="0" x2=".4" y2="1"><stop offset="0" stop-color="#3e62ee"/><stop offset="1" stop-color="#6f8cf6"/></linearGradient></defs><path d="M.8 14L6.6 11.1" stroke="#4a7898" stroke-width="1.6"/><path d="M6 10.2L19.4 3.4Q16 10.6 8.6 14.6Z" fill="url(#bl20)"/></svg>
<div class="t" style="left:103.00px;top:572.04px;font-size:13.5px;line-height:19px;letter-spacing:-0.354px;color:#000;">Resultierende</div>
<div class="a" style="left:55.3px;top:594.4px;width:14px;height:14px;border:1px solid #333;background:#fff"></div><svg class="a" style="left:55.3px;top:594.4px" width="16" height="16"><path d="M3.2 8.2L6.6 11.6L13 4.2" stroke="#222" stroke-width="1.4" fill="none"/></svg>
<div class="a" style="left:77px;top:596.5px;width:14px;height:14px;background:#ccffff;"></div>
<div class="t" style="left:97.20px;top:595.04px;font-size:13.5px;line-height:19px;letter-spacing:-0.243px;color:#000;">1 - 1</div>
<div class="a" style="left:55.3px;top:617.4px;width:14px;height:14px;border:1px solid #333;background:#fff"></div><svg class="a" style="left:55.3px;top:617.4px" width="16" height="16"><path d="M3.2 8.2L6.6 11.6L13 4.2" stroke="#222" stroke-width="1.4" fill="none"/></svg>
<div class="a" style="left:77px;top:619.5px;width:14px;height:14px;background:#f5c211;"></div>
<div class="t" style="left:97.20px;top:618.04px;font-size:13.5px;line-height:19px;letter-spacing:-0.243px;color:#000;">2 - 2</div>
<div class="a" style="left:55.3px;top:640.4px;width:14px;height:14px;border:1px solid #333;background:#fff"></div><svg class="a" style="left:55.3px;top:640.4px" width="16" height="16"><path d="M3.2 8.2L6.6 11.6L13 4.2" stroke="#222" stroke-width="1.4" fill="none"/></svg>
<div class="a" style="left:77px;top:642.5px;width:14px;height:14px;background:#bd7272;"></div>
<div class="t" style="left:97.20px;top:641.04px;font-size:13.5px;line-height:19px;letter-spacing:-0.243px;color:#000;">3 - 3</div>
<div class="a" style="left:55.3px;top:663.4px;width:14px;height:14px;border:1px solid #333;background:#fff"></div><svg class="a" style="left:55.3px;top:663.4px" width="16" height="16"><path d="M3.2 8.2L6.6 11.6L13 4.2" stroke="#222" stroke-width="1.4" fill="none"/></svg>
<div class="a" style="left:77px;top:665.5px;width:14px;height:14px;background:#74b700;"></div>
<div class="t" style="left:97.20px;top:664.04px;font-size:13.5px;line-height:19px;letter-spacing:-0.243px;color:#000;">4 - 4</div>
<svg class="a" style="left:8px;top:689.0px" width="14" height="14"><path d="M5.5 1.7L11 7L5.5 12.3" stroke="#9c9c9c" stroke-width="1.5" fill="none"/></svg>
<div class="a" style="left:30.3px;top:686.4px;width:14px;height:14px;border:1px solid #333;background:#fff"></div>
<svg class="a" style="left:52px;top:685.5px;overflow:visible" width="20" height="20"><path d="M5.7 8.5L9.5 11L1.4 17Z" fill="#c9c9c9"/><rect x="5.7" y="2.7" width="13.4" height="8.3" fill="#d3d3d3"/><text x="7.2" y="9.1" font-size="9" font-weight="bold" fill="#111" letter-spacing=".9" font-family="Liberation Sans, sans-serif">xx</text></svg>
<div class="t" style="left:78.30px;top:687.04px;font-size:13.5px;line-height:19px;letter-spacing:-0.488px;color:#000;">Werte an Flächen</div>
<div class="a" style="left:4px;top:730px;width:312px;height:261px;background:#fff;overflow:hidden"><div style="position:absolute;left:-4px;top:-730px">
<svg class="a" style="left:8px;top:735.0px" width="14" height="14"><path d="M5.5 1.7L11 7L5.5 12.3" stroke="#9c9c9c" stroke-width="1.5" fill="none"/></svg>
<div class="a" style="left:30.3px;top:732.4px;width:14px;height:14px;border:1px solid #333;background:#fff"></div>
<svg class="a" style="left:52px;top:731.5px;overflow:visible" width="20" height="20"><text x=".6" y="5.6" font-size="9.4" font-weight="bold" fill="#111" letter-spacing=".35" font-family="Liberation Sans, sans-serif">x.xx</text><path d="M0 11.4V16L10.8 11.4Z" fill="#1f3fa4"/><path d="M20 6.2V10.8H11.4Z" fill="#d92c14"/><path d="M0 11.1H20" stroke="#222" stroke-width="1"/></svg>
<div class="t" style="left:78.30px;top:733.04px;font-size:13.5px;line-height:19px;letter-spacing:-0.307px;color:#000;">Ergebniswerte</div>
<div class="a" style="left:30.3px;top:755.4px;width:14px;height:14px;border:1px solid #333;background:#fff"></div><svg class="a" style="left:30.3px;top:755.4px" width="16" height="16"><path d="M3.2 8.2L6.6 11.6L13 4.2" stroke="#222" stroke-width="1.4" fill="none"/></svg>
<svg class="a" style="left:52px;top:754.5px;overflow:visible" width="20" height="20"><path d="M0 11.4V16L10.8 11.4Z" fill="#1f3fa4"/><path d="M20 6.2V10.8H11.4Z" fill="#d92c14"/><path d="M0 11.1H20" stroke="#222" stroke-width="1"/><path d="M8.44 4Q13.6 -1.5 18.76 4Q13.6 9.5 8.44 4Z" fill="#fff" stroke="#1c2a6e" stroke-width="1"/><circle cx="13.6" cy="4" r="2.32" fill="#3560d4"/><circle cx="13.6" cy="4" r="1.03" fill="#06061e"/></svg>
<div class="t" style="left:78.30px;top:756.04px;font-size:13.5px;line-height:19px;letter-spacing:-0.117px;color:#000;">Titelinformationen</div>
<div class="a" style="left:30.3px;top:778.4px;width:14px;height:14px;border:1px solid #333;background:#fff"></div><svg class="a" style="left:30.3px;top:778.4px" width="16" height="16"><path d="M3.2 8.2L6.6 11.6L13 4.2" stroke="#222" stroke-width="1.4" fill="none"/></svg>
<svg class="a" style="left:52px;top:777.5px;overflow:visible" width="20" height="20"><path d="M0 11.4V16L10.8 11.4Z" fill="#1f3fa4"/><path d="M20 6.2V10.8H11.4Z" fill="#d92c14"/><path d="M0 11.1H20" stroke="#222" stroke-width="1"/><path d="M8.44 4Q13.6 -1.5 18.76 4Q13.6 9.5 8.44 4Z" fill="#fff" stroke="#1c2a6e" stroke-width="1"/><circle cx="13.6" cy="4" r="2.32" fill="#3560d4"/><circle cx="13.6" cy="4" r="1.03" fill="#06061e"/></svg>
<div class="t" style="left:78.30px;top:779.04px;font-size:13.5px;line-height:19px;letter-spacing:-0.031px;color:#000;">Max/Min-Informationen</div>
<svg class="a" style="left:8px;top:804.0px" width="14" height="14"><path d="M5.5 1.7L11 7L5.5 12.3" stroke="#9c9c9c" stroke-width="1.5" fill="none"/></svg>
<div class="a" style="left:30.3px;top:801.4px;width:14px;height:14px;border:1px solid #2e6fc0;background:#cfe3f7"></div>
<svg class="a" style="left:52px;top:800.5px;overflow:visible" width="20" height="20"><path d="M0 11.4V16L10.8 11.4Z" fill="#1f3fa4"/><path d="M20 6.2V10.8H11.4Z" fill="#d92c14"/><path d="M0 11.1H20" stroke="#222" stroke-width="1"/><path d="M8.44 4Q13.6 -1.5 18.76 4Q13.6 9.5 8.44 4Z" fill="#fff" stroke="#1c2a6e" stroke-width="1"/><circle cx="13.6" cy="4" r="2.32" fill="#3560d4"/><circle cx="13.6" cy="4" r="1.03" fill="#06061e"/></svg>
<div class="t" style="left:78.30px;top:802.04px;font-size:13.5px;line-height:19px;letter-spacing:-0.139px;color:#000;">Verformung</div>
<svg class="a" style="left:8px;top:827.0px" width="14" height="14"><path d="M5.5 1.7L11 7L5.5 12.3" stroke="#9c9c9c" stroke-width="1.5" fill="none"/></svg>
<div class="a" style="left:30.3px;top:824.4px;width:14px;height:14px;border:1px solid #2e6fc0;background:#cfe3f7"></div>
<svg class="a" style="left:52px;top:823.5px;overflow:visible" width="20" height="20"><path d="M0 11.4V16L10.8 11.4Z" fill="#1f3fa4"/><path d="M20 6.2V10.8H11.4Z" fill="#d92c14"/><path d="M0 11.1H20" stroke="#222" stroke-width="1"/><path d="M8.44 4Q13.6 -1.5 18.76 4Q13.6 9.5 8.44 4Z" fill="#fff" stroke="#1c2a6e" stroke-width="1"/><circle cx="13.6" cy="4" r="2.32" fill="#3560d4"/><circle cx="13.6" cy="4" r="1.03" fill="#06061e"/></svg>
<div class="t" style="left:78.30px;top:825.04px;font-size:13.5px;line-height:19px;letter-spacing:-0.589px;color:#000;">Linien</div>
<svg class="a" style="left:8px;top:850.0px" width="14" height="14"><path d="M5.5 1.7L11 7L5.5 12.3" stroke="#9c9c9c" stroke-width="1.5" fill="none"/></svg>
<div class="a" style="left:30.3px;top:847.4px;width:14px;height:14px;border:1px solid #2e6fc0;background:#cfe3f7"></div>
<svg class="a" style="left:52px;top:846.5px;overflow:visible" width="20" height="20"><path d="M0 11.4V16L10.8 11.4Z" fill="#1f3fa4"/><path d="M20 6.2V10.8H11.4Z" fill="#d92c14"/><path d="M0 11.1H20" stroke="#222" stroke-width="1"/><path d="M8.44 4Q13.6 -1.5 18.76 4Q13.6 9.5 8.44 4Z" fill="#fff" stroke="#1c2a6e" stroke-width="1"/><circle cx="13.6" cy="4" r="2.32" fill="#3560d4"/><circle cx="13.6" cy="4" r="1.03" fill="#06061e"/></svg>
<div class="t" style="left:78.30px;top:848.04px;font-size:13.5px;line-height:19px;letter-spacing:-0.636px;color:#000;">Stäbe</div>
<svg class="a" style="left:8px;top:873.0px" width="14" height="14"><path d="M5.5 1.7L11 7L5.5 12.3" stroke="#9c9c9c" stroke-width="1.5" fill="none"/></svg>
<div class="a" style="left:30.3px;top:870.4px;width:14px;height:14px;border:1px solid #2e6fc0;background:#cfe3f7"></div>
<svg class="a" style="left:52px;top:869.5px;overflow:visible" width="20" height="20"><path d="M0 11.4V16L10.8 11.4Z" fill="#1f3fa4"/><path d="M20 6.2V10.8H11.4Z" fill="#d92c14"/><path d="M0 11.1H20" stroke="#222" stroke-width="1"/><path d="M8.44 4Q13.6 -1.5 18.76 4Q13.6 9.5 8.44 4Z" fill="#fff" stroke="#1c2a6e" stroke-width="1"/><circle cx="13.6" cy="4" r="2.32" fill="#3560d4"/><circle cx="13.6" cy="4" r="1.03" fill="#06061e"/></svg>
<div class="t" style="left:78.30px;top:871.04px;font-size:13.5px;line-height:19px;letter-spacing:-0.833px;color:#000;">Flächen</div>
<svg class="a" style="left:8px;top:896.0px" width="14" height="14"><path d="M5.5 1.7L11 7L5.5 12.3" stroke="#9c9c9c" stroke-width="1.5" fill="none"/></svg>
<div class="a" style="left:30.3px;top:893.4px;width:14px;height:14px;border:1px solid #2e6fc0;background:#cfe3f7"></div>
<svg class="a" style="left:52px;top:892.5px;overflow:visible" width="20" height="20"><path d="M0 11.4V16L10.8 11.4Z" fill="#1f3fa4"/><path d="M20 6.2V10.8H11.4Z" fill="#d92c14"/><path d="M0 11.1H20" stroke="#222" stroke-width="1"/><path d="M8.44 4Q13.6 -1.5 18.76 4Q13.6 9.5 8.44 4Z" fill="#fff" stroke="#1c2a6e" stroke-width="1"/><circle cx="13.6" cy="4" r="2.32" fill="#3560d4"/><circle cx="13.6" cy="4" r="1.03" fill="#06061e"/></svg>
<div class="t" style="left:78.30px;top:894.04px;font-size:13.5px;line-height:19px;letter-spacing:-0.488px;color:#000;">Werte an Flächen</div>
<svg class="a" style="left:8px;top:919.0px" width="14" height="14"><path d="M5.5 1.7L11 7L5.5 12.3" stroke="#9c9c9c" stroke-width="1.5" fill="none"/></svg>
<div class="a" style="left:30.3px;top:916.4px;width:14px;height:14px;border:1px solid #2e6fc0;background:#cfe3f7"></div>
<svg class="a" style="left:52px;top:915.5px;overflow:visible" width="20" height="20"><defs><clipPath id="rc30"><rect x="0" y="0" width="20" height="20"/></clipPath></defs><g clip-path="url(#rc30)"><rect width="20" height="20" fill="#2a64e0"/><circle cx="20" cy="20" r="21" fill="#22b6e6"/><circle cx="20" cy="20" r="18.3" fill="#2fd0a0"/><circle cx="20" cy="20" r="15.6" fill="#46d83c"/><circle cx="20" cy="20" r="12.9" fill="#b6e22a"/><circle cx="20" cy="20" r="10.2" fill="#f4e21e"/><circle cx="20" cy="20" r="7.5" fill="#f4a01e"/><circle cx="20" cy="20" r="4.8" fill="#ee3a1a"/></g></svg>
<div class="t" style="left:78.30px;top:917.04px;font-size:13.5px;line-height:19px;letter-spacing:-0.199px;color:#000;">Darstellungsart</div>
<svg class="a" style="left:8px;top:942.0px" width="14" height="14"><path d="M5.5 1.7L11 7L5.5 12.3" stroke="#9c9c9c" stroke-width="1.5" fill="none"/></svg>
<div class="a" style="left:30.3px;top:939.4px;width:14px;height:14px;border:1px solid #333;background:#fff"></div><svg class="a" style="left:30.3px;top:939.4px" width="16" height="16"><path d="M3.2 8.2L6.6 11.6L13 4.2" stroke="#222" stroke-width="1.4" fill="none"/></svg>
<svg class="a" style="left:52px;top:938.5px;overflow:visible" width="20" height="20"><path d="M0 11.4V16L10.8 11.4Z" fill="#1f3fa4"/><path d="M20 6.2V10.8H11.4Z" fill="#d92c14"/><path d="M0 11.1H20" stroke="#222" stroke-width="1"/><path d="M8.44 4Q13.6 -1.5 18.76 4Q13.6 9.5 8.44 4Z" fill="#fff" stroke="#1c2a6e" stroke-width="1"/><circle cx="13.6" cy="4" r="2.32" fill="#3560d4"/><circle cx="13.6" cy="4" r="1.03" fill="#06061e"/></svg>
<div class="t" style="left:78.30px;top:940.04px;font-size:13.5px;line-height:19px;letter-spacing:-0.312px;color:#000;">Rippen - Effektiver Beitrag auf Fläch...</div>
<svg class="a" style="left:8px;top:965.0px" width="14" height="14"><path d="M5.5 1.7L11 7L5.5 12.3" stroke="#9c9c9c" stroke-width="1.5" fill="none"/></svg>
<div class="a" style="left:30.3px;top:962.4px;width:14px;height:14px;border:1px solid #2e6fc0;background:#cfe3f7"></div>
<svg class="a" style="left:52px;top:961.5px;overflow:visible" width="20" height="20"><path d="M0 11.4V16L10.8 11.4Z" fill="#1f3fa4"/><path d="M20 6.2V10.8H11.4Z" fill="#d92c14"/><path d="M0 11.1H20" stroke="#222" stroke-width="1"/><path d="M8.44 4Q13.6 -1.5 18.76 4Q13.6 9.5 8.44 4Z" fill="#fff" stroke="#1c2a6e" stroke-width="1"/><circle cx="13.6" cy="4" r="2.32" fill="#3560d4"/><circle cx="13.6" cy="4" r="1.03" fill="#06061e"/></svg>
<div class="t" style="left:78.30px;top:963.04px;font-size:13.5px;line-height:19px;letter-spacing:-0.285px;color:#000;">Lagerreaktionen</div>
<svg class="a" style="left:8px;top:988.0px" width="14" height="14"><path d="M5.5 1.7L11 7L5.5 12.3" stroke="#9c9c9c" stroke-width="1.5" fill="none"/></svg>
<div class="a" style="left:30.3px;top:985.4px;width:14px;height:14px;border:1px solid #2e6fc0;background:#cfe3f7"></div>
<svg class="a" style="left:52px;top:984.5px;overflow:visible" width="20" height="20"><path d="M0 11.4V16L10.8 11.4Z" fill="#1f3fa4"/><path d="M20 6.2V10.8H11.4Z" fill="#d92c14"/><path d="M0 11.1H20" stroke="#222" stroke-width="1"/><path d="M8.44 4Q13.6 -1.5 18.76 4Q13.6 9.5 8.44 4Z" fill="#fff" stroke="#1c2a6e" stroke-width="1"/><circle cx="13.6" cy="4" r="2.32" fill="#3560d4"/><circle cx="13.6" cy="4" r="1.03" fill="#06061e"/></svg>
<div class="t" style="left:78.30px;top:986.04px;font-size:13.5px;line-height:19px;letter-spacing:-0.332px;color:#000;">Lastverteilung</div>
</div></div>
<div class="a" style="left:297px;top:730px;width:19px;height:261px;background:#f0f0f0;"></div>
<div class="a" style="left:297px;top:751px;width:19px;height:200px;background:#c9c9c9;"></div>
<svg class="a" style="left:297px;top:730px" width="19" height="261"><path d="M5 13.5L9.5 9L14 13.5" stroke="#444" stroke-width="1.4" fill="none"/><path d="M5 247.5L9.5 252L14 247.5" stroke="#444" stroke-width="1.4" fill="none"/></svg>
<div class="a" style="left:4px;top:991px;width:313px;height:30px;background:#f8f8f8;"></div>
<div class="a" style="left:3.4px;top:991px;width:37.9px;height:27px;background:#eeeeee;border:1px solid #cacadc;box-sizing:border-box"></div>
<div class="a" style="left:42.3px;top:991px;width:37.2px;height:27px;background:#eeeeee;border:1px solid #cacadc;box-sizing:border-box"></div>
<div class="a" style="left:80.4px;top:991px;width:36.8px;height:27px;background:#eeeeee;border:1px solid #cacadc;box-sizing:border-box"></div>
<div class="a" style="left:117.2px;top:991px;width:39.4px;height:29.4px;background:#fff;border-right:1px solid #cacadc;border-bottom:1px solid #cacadc;box-sizing:border-box"></div>
<div class="a" style="left:2.5px;top:1020.2px;width:115px;height:1px;background:#cacadc;"></div>
<svg class="a" style="left:13px;top:994px;overflow:visible" width="20" height="20"><path d="M1 6H6L7.5 7.5H14V16H1Z" fill="#f2c230" stroke="#c89a18" stroke-width=".7"/><rect x="5" y="1" width="15.5" height="12.5" fill="#f4f4f4" stroke="#7a7a7a" stroke-width="1"/><rect x="5" y="1" width="15.5" height="3" fill="#4f86e8"/><path d="M1 7.8H14V16H1Z" fill="#f6cf45"/><path d="M6 13.5L13.5 9.5Q17.5 10.5 20 14L14.5 20Q11 15 6 13.5Z" fill="#8fbaf0" stroke="#2c4f9c" stroke-width=".8"/><circle cx="6" cy="13.5" r="1.2" fill="#e01010"/><circle cx="13.5" cy="9.5" r="1.2" fill="#e01010"/><circle cx="20" cy="14" r="1.2" fill="#e01010"/><circle cx="14.5" cy="20" r="1.2" fill="#e01010"/></svg>
<svg class="a" style="left:51.5px;top:994px;overflow:visible" width="20" height="20"><path d="M2.7 10.5Q10.5 2.18 18.3 10.5Q10.5 18.82 2.7 10.5Z" fill="#fff" stroke="#1c2a6e" stroke-width="1"/><circle cx="10.5" cy="10.5" r="3.51" fill="#3560d4"/><circle cx="10.5" cy="10.5" r="1.56" fill="#06061e"/></svg>
<svg class="a" style="left:90px;top:994px;overflow:visible" width="20" height="20"><rect x="1" y="6" width="13" height="11" rx="2" fill="#696969"/><path d="M13.5 11.5L19 7.2V15.8Z" fill="#696969"/></svg>
<svg class="a" style="left:129px;top:994px;overflow:visible" width="20" height="20"><path d="M0 13.1V17.6L10.8 13.1Z" fill="#1f3fa4"/><path d="M20 8V12.5H11.4Z" fill="#d92c14"/><path d="M0 12.8H20" stroke="#222" stroke-width="1"/></svg>
<div class="a" style="left:0px;top:1022px;width:1400px;height:27px;background:#f5f5f5;"></div>
<div class="a" style="left:691px;top:1024px;width:1px;height:24px;background:#cfcfcf;"></div>
<div class="a" style="left:822px;top:1024px;width:1px;height:24px;background:#cfcfcf;"></div>
<div class="a" style="left:1017px;top:1024px;width:1px;height:24px;background:#cfcfcf;"></div>
<div class="a" style="left:1097px;top:1024px;width:1px;height:24px;background:#cfcfcf;"></div>
<div class="a" style="left:1191px;top:1024px;width:1px;height:24px;background:#cfcfcf;"></div>
<div class="a" style="left:1285px;top:1024px;width:1px;height:24px;background:#cfcfcf;"></div>
<div class="a" style="left:1380px;top:1024px;width:1px;height:24px;background:#cfcfcf;"></div>
<div class="a" style="left:345px;top:1025px;width:41px;height:21px;background:#e9e9e9;border-top:1px solid #b4b4b4;border-left:1px solid #b4b4b4;border-right:1px solid #e0e0e0"></div>
<div class="a" style="left:509px;top:1025px;width:52px;height:21px;background:#e9e9e9;border-top:1px solid #b4b4b4;border-left:1px solid #b4b4b4;border-right:1px solid #e0e0e0"></div>
<div class="t" style="left:350.00px;top:1028.04px;font-size:13.5px;line-height:19px;letter-spacing:-1.339px;color:#000;">FANG</div>
<div class="t" style="left:394.30px;top:1028.04px;font-size:13.5px;line-height:19px;letter-spacing:-1.743px;color:#000;">RASTER</div>
<div class="t" style="left:451.40px;top:1028.04px;font-size:13.5px;line-height:19px;letter-spacing:-1.667px;color:#000;">LRASTER</div>
<div class="t" style="left:514.30px;top:1028.04px;font-size:13.5px;line-height:19px;letter-spacing:-1.171px;color:#000;">OFANG</div>
<div class="t" style="left:827.60px;top:1028.04px;font-size:13.5px;line-height:19px;letter-spacing:-0.689px;color:#000;">KS: Global XYZ</div>
<div class="t" style="left:1021.00px;top:1028.04px;font-size:13.5px;line-height:19px;letter-spacing:-0.705px;color:#000;">Ebene: XY</div>
<svg class="a" style="left:0;top:0" width="1400" height="1050"><rect x="1393" y="1036" width="2.6" height="2.6" fill="#b0b0b0"/><rect x="1389" y="1040" width="2.6" height="2.6" fill="#b0b0b0"/><rect x="1393" y="1040" width="2.6" height="2.6" fill="#b0b0b0"/><rect x="1385.5" y="1044" width="2.6" height="2.6" fill="#b0b0b0"/><rect x="1389" y="1044" width="2.6" height="2.6" fill="#b0b0b0"/><rect x="1393" y="1044" width="2.6" height="2.6" fill="#b0b0b0"/></svg>
<div class="a" style="left:0px;top:0px;width:1400px;height:1px;background:#7a7a7a;"></div>
<div class="a" style="left:0px;top:0px;width:1px;height:1050px;background:#7a7a7a;"></div>
<div class="a" style="left:1398px;top:0px;width:2px;height:1050px;background:#6f6f6f;"></div>
<div class="a" style="left:0px;top:1048px;width:1400px;height:2px;background:#6f6f6f;"></div>
</body></html>
